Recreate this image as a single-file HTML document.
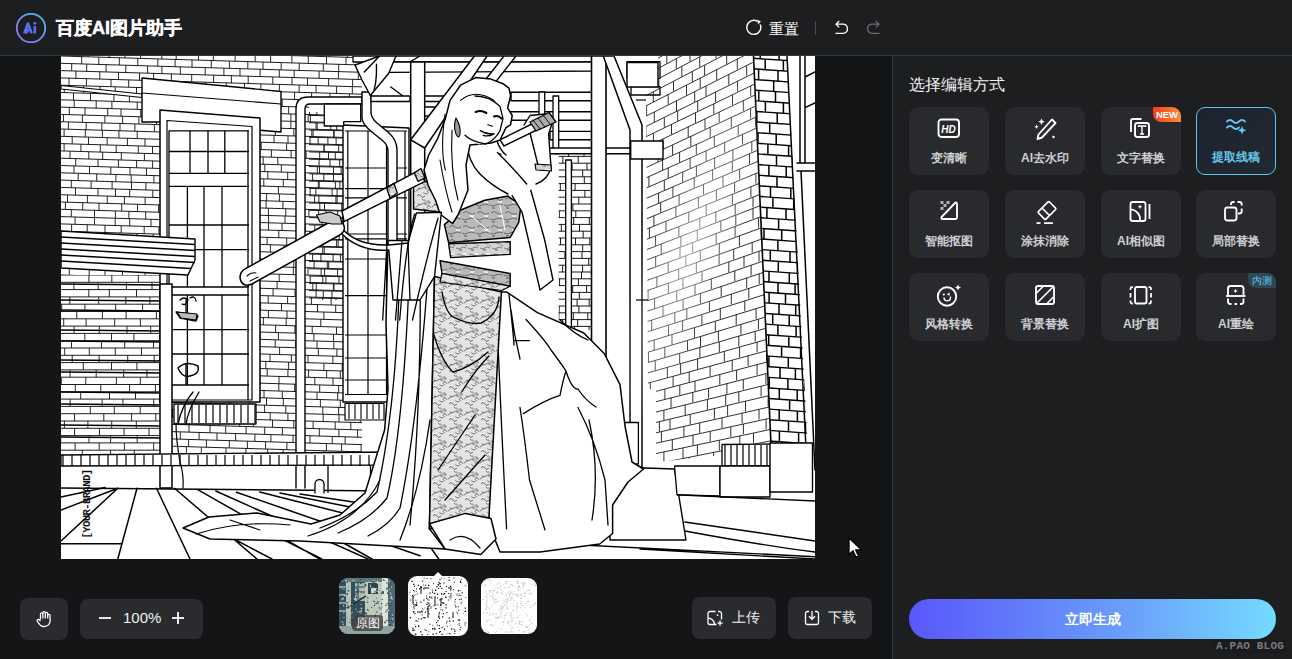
<!DOCTYPE html>
<html><head><meta charset="utf-8">
<style>
*{margin:0;padding:0;box-sizing:border-box}
html,body{width:1292px;height:659px;overflow:hidden;background:#141517;font-family:"Liberation Sans",sans-serif;}
.abs{position:absolute}
#hdr{position:absolute;left:0;top:0;width:1292px;height:56px;background:#1d1e20;border-bottom:1px solid #30353a}
#canvas{position:absolute;left:0;top:56px;width:892px;height:603px;background:#141517}
#panel{position:absolute;left:892px;top:56px;width:400px;height:603px;background:#1d1e20;border-left:1px solid #30353a}
.title{position:absolute;left:56px;top:16px;font-size:18px;font-weight:900;color:#fff;-webkit-text-stroke:0.45px #fff;letter-spacing:0px;white-space:nowrap}
.btn{position:absolute;background:#2a2b2f;border-radius:8px}
.card{position:absolute;width:80px;height:68px;background:#292a2e;border-radius:9px}
.card .lbl{position:absolute;left:0;width:100%;top:42.5px;text-align:center;font-size:12px;font-weight:bold;color:#cfcfd1;white-space:nowrap}
.card svg{position:absolute;left:26px;top:9px}
.sel{background:linear-gradient(135deg,#1d2230,#212a30);border:1.5px solid #5ec6ec}
.sel .lbl{color:#6ac5e8}
</style></head>
<body>
<div id="hdr">
  <svg class="abs" style="left:15px;top:12px" width="32" height="32" viewBox="0 0 32 32">
    <defs><linearGradient id="lg1" x1="0" y1="1" x2="1" y2="0"><stop offset="0" stop-color="#9b6cf5"/><stop offset="1" stop-color="#3fc0ee"/></linearGradient></defs>
    <circle cx="16" cy="16" r="14.2" fill="none" stroke="url(#lg1)" stroke-width="1.8"/>
    <path d="M9.3 21.3 L13 11.5 L16.7 21.3 M10.8 21.3 L13.6 17.2" fill="none" stroke="#5a6ef2" stroke-width="2.6" stroke-linejoin="round"/>
    <rect x="18.5" y="14" width="2.6" height="7.5" fill="#5a6ef2"/>
    <circle cx="19.8" cy="11.2" r="1.5" fill="#5a6ef2"/>
  </svg>
  <div class="title">百度AI图片助手</div>
  <svg class="abs" style="left:745.5px;top:19px" width="18" height="18" viewBox="0 0 18 18">
    <path d="M14.2 5.5 A7 7 0 1 1 11.5 2.4" fill="none" stroke="#fff" stroke-width="1.4"/>
    <path d="M11.2 0.8 L15 2.6 L12 5.2 Z" fill="#fff"/>
  </svg>
  <div class="abs" style="left:769px;top:19.5px;font-size:14.5px;color:#fff;white-space:nowrap">重置</div>
  <div class="abs" style="left:815px;top:21px;width:1px;height:14px;background:#4a4c50"></div>
  <svg class="abs" style="left:834px;top:20px" width="16" height="15" viewBox="0 0 16 15">
    <path d="M1.5 13.3 H9.5 A4.6 4.6 0 0 0 9.5 4.2 H2.5" fill="none" stroke="#fff" stroke-width="1.3"/>
    <path d="M5.2 1 L2 4.2 L5.2 7.4" fill="none" stroke="#fff" stroke-width="1.3"/>
  </svg>
  <svg class="abs" style="left:865px;top:20px" width="16" height="15" viewBox="0 0 16 15">
    <path d="M14.5 13.3 H6.5 A4.6 4.6 0 0 1 6.5 4.2 H13.5" fill="none" stroke="#6a6b6e" stroke-width="1.3"/>
    <path d="M10.8 1 L14 4.2 L10.8 7.4" fill="none" stroke="#6a6b6e" stroke-width="1.3"/>
  </svg>
</div>

<div id="canvas">
  <div class="abs" id="art" style="left:61px;top:0px;width:754px;height:503px;background:#fff;overflow:hidden">
  <!--ART--><svg width="754" height="503" viewBox="61 56 754 503" style="display:block"><clipPath id="cb1"><polygon points="61,56 362,56 362,97 309,97 309,112 343,112 343,402 392,402 392,455 160,455 160,275 61,275"/></clipPath><g clip-path="url(#cb1)" fill="none" stroke="#111"><path d="M61 34.1L362 43.1M61 41.4L362 50.4M61 48.7L362 57.7M61 56L362 65M61 63.3L362 72.3M61 70.6L362 79.6M61 77.9L362 86.9M61 85.2L362 94.2M61 92.5L362 101.5M61 99.8L362 108.8M61 107.1L362 116.1M61 114.4L362 123.4M61 121.7L362 130.7M61 129L362 138M61 136.3L362 145.3M61 143.6L362 152.6M61 150.9L362 159.9M61 158.2L362 167.2M61 165.5L362 174.5M61 172.8L362 181.8M61 180.1L362 189.1M61 187.4L362 196.4M61 194.7L362 203.7M61 202L362 211M61 209.3L362 218.3M61 216.6L362 225.6M61 223.9L362 232.9M61 231.2L362 240.2M61 238.5L362 247.5M61 245.8L362 254.8M61 253.1L362 262.1M61 260.4L362 269.4M61 267.7L362 276.7M61 275L362 284M61 282.3L362 291.3M61 289.6L362 298.6M61 296.9L362 305.9M61 304.2L362 313.2M61 311.5L362 320.5M61 318.8L362 327.8M61 326.1L362 335.1M61 333.4L362 342.4M61 340.7L362 349.7M61 348L362 357M61 355.3L362 364.3M61 362.6L362 371.6M61 369.9L362 378.9M61 377.2L362 386.2M61 384.5L362 393.5M61 391.8L362 400.8M61 399.1L362 408.1M61 406.4L362 415.4M61 413.7L362 422.7M61 421L362 430M61 428.3L362 437.3M61 435.6L362 444.6M61 442.9L362 451.9M61 450.2L362 459.2M61 457.5L362 466.5M61 464.8L362 473.8M61 472.1L362 481.1" stroke-width="0.95"/><path d="M48.7 33.7v7.3M67.8 34.3v7.3M88.7 34.9v7.3M106.8 35.5v7.3M123.5 36v7.3M138.7 36.4v7.3M161.9 37.1v7.3M175.7 37.5v7.3M199.6 38.3v7.3M215.6 38.7v7.3M234.4 39.3v7.3M256.3 40v7.3M272.8 40.5v7.3M295.3 41.1v7.3M311.6 41.6v7.3M329.9 42.2v7.3M347.2 42.7v7.3M41.9 40.8v7.3M58.4 41.3v7.3M78.6 41.9v7.3M98.8 42.5v7.3M115.3 43v7.3M136.3 43.7v7.3M158 44.3v7.3M177.7 44.9v7.3M191.8 45.3v7.3M210.2 45.9v7.3M228.5 46.4v7.3M252.5 47.1v7.3M272.5 47.7v7.3M289.7 48.3v7.3M308.4 48.8v7.3M328.7 49.4v7.3M347.3 50v7.3M51 48.4v7.3M72.3 49v7.3M88.3 49.5v7.3M109.2 50.1v7.3M125 50.6v7.3M140.6 51.1v7.3M161.8 51.7v7.3M176.2 52.2v7.3M198.5 52.8v7.3M213.3 53.3v7.3M235.1 53.9v7.3M255.2 54.5v7.3M270.6 55v7.3M291.9 55.6v7.3M308.3 56.1v7.3M326.5 56.7v7.3M346 57.2v7.3M38.1 55.3v7.3M58.9 55.9v7.3M81.7 56.6v7.3M98.8 57.1v7.3M119.3 57.7v7.3M137.8 58.3v7.3M157.8 58.9v7.3M175.1 59.4v7.3M192 59.9v7.3M211.3 60.5v7.3M229.4 61.1v7.3M247.8 61.6v7.3M263 62.1v7.3M281.2 62.6v7.3M299.2 63.1v7.3M323.3 63.9v7.3M338.7 64.3v7.3M357.7 64.9v7.3M55.9 63.1v7.3M71.7 63.6v7.3M86.7 64.1v7.3M106.1 64.7v7.3M125.8 65.2v7.3M147.6 65.9v7.3M161.9 66.3v7.3M180.3 66.9v7.3M205.2 67.6v7.3M223.9 68.2v7.3M240 68.7v7.3M260.1 69.3v7.3M279.3 69.8v7.3M294.2 70.3v7.3M319.1 71v7.3M338.4 71.6v7.3M358.3 72.2v7.3M41.2 70v7.3M56.4 70.5v7.3M75.9 71v7.3M99.8 71.8v7.3M118.5 72.3v7.3M139.5 73v7.3M153.6 73.4v7.3M171.4 73.9v7.3M191.7 74.5v7.3M213.6 75.2v7.3M231.4 75.7v7.3M248.2 76.2v7.3M272.8 77v7.3M292 77.5v7.3M307.5 78v7.3M328.6 78.6v7.3M352.6 79.3v7.3M53.8 77.7v7.3M69 78.1v7.3M86.4 78.7v7.3M111 79.4v7.3M128.7 79.9v7.3M148.6 80.5v7.3M166.3 81.1v7.3M180.6 81.5v7.3M205.3 82.2v7.3M226.2 82.9v7.3M244.5 83.4v7.3M260.9 83.9v7.3M279.4 84.5v7.3M299.1 85v7.3M316.1 85.6v7.3M336.6 86.2v7.3M352.3 86.6v7.3M43.1 84.7v7.3M64.3 85.3v7.3M83.6 85.9v7.3M100.1 86.4v7.3M115.2 86.8v7.3M136.5 87.5v7.3M158.7 88.1v7.3M175.5 88.6v7.3M195.9 89.2v7.3M213.4 89.8v7.3M233.5 90.4v7.3M254.7 91v7.3M272.5 91.5v7.3M294.6 92.2v7.3M311.6 92.7v7.3M330 93.3v7.3M349.4 93.9v7.3M54.1 92.3v7.3M73.5 92.9v7.3M90.5 93.4v7.3M113.9 94.1v7.3M129.4 94.6v7.3M148.7 95.1v7.3M164.8 95.6v7.3M184.7 96.2v7.3M206.2 96.9v7.3M222.7 97.4v7.3M238.9 97.8v7.3M264.4 98.6v7.3M282.2 99.1v7.3M298 99.6v7.3M321 100.3v7.3M336.2 100.8v7.3M354.7 101.3v7.3M42.6 99.2v7.3M58.7 99.7v7.3M74.2 100.2v7.3M96.2 100.9v7.3M111.9 101.3v7.3M137.2 102.1v7.3M153.9 102.6v7.3M171.6 103.1v7.3M193.1 103.8v7.3M211.5 104.3v7.3M234.6 105v7.3M248.6 105.4v7.3M271.8 106.1v7.3M288.7 106.6v7.3M309.5 107.3v7.3M324.5 107.7v7.3M348.7 108.4v7.3M52 106.8v7.3M69.3 107.3v7.3M85 107.8v7.3M107.7 108.5v7.3M121 108.9v7.3M140.7 109.5v7.3M157.7 110v7.3M175.2 110.5v7.3M194 111.1v7.3M214 111.7v7.3M232.3 112.2v7.3M249.7 112.8v7.3M267.7 113.3v7.3M290.9 114v7.3M308.2 114.5v7.3M326.7 115.1v7.3M348.9 115.7v7.3M42.7 113.9v7.3M63.5 114.5v7.3M82.4 115v7.3M104.9 115.7v7.3M122.6 116.2v7.3M138.9 116.7v7.3M156.5 117.3v7.3M177.6 117.9v7.3M194.2 118.4v7.3M219.3 119.1v7.3M235.4 119.6v7.3M253.5 120.2v7.3M271.5 120.7v7.3M290.9 121.3v7.3M316 122.1v7.3M330.8 122.5v7.3M352.1 123.1v7.3M48.8 121.3v7.3M68.4 121.9v7.3M86.2 122.5v7.3M101.8 122.9v7.3M120 123.5v7.3M134.9 123.9v7.3M154.4 124.5v7.3M175.5 125.1v7.3M196.3 125.8v7.3M217.5 126.4v7.3M232.7 126.9v7.3M252.6 127.4v7.3M275.4 128.1v7.3M293.8 128.7v7.3M313.1 129.3v7.3M334.1 129.9v7.3M349.9 130.4v7.3M45.2 128.5v7.3M64.1 129.1v7.3M85.3 129.7v7.3M102.4 130.2v7.3M118.9 130.7v7.3M137.2 131.3v7.3M160.3 132v7.3M180.2 132.6v7.3M199.1 133.1v7.3M217.9 133.7v7.3M236.2 134.3v7.3M256.2 134.9v7.3M274 135.4v7.3M288 135.8v7.3M310 136.5v7.3M327.9 137v7.3M347.3 137.6v7.3M52.5 136v7.3M72.2 136.6v7.3M88.5 137.1v7.3M107.2 137.7v7.3M127.4 138.3v7.3M145 138.8v7.3M163.7 139.4v7.3M186 140v7.3M203.3 140.6v7.3M223.4 141.2v7.3M240.2 141.7v7.3M261.2 142.3v7.3M286.6 143.1v7.3M300.8 143.5v7.3M324.1 144.2v7.3M338.7 144.6v7.3M360.6 145.3v7.3M40.2 143v7.3M64.1 143.7v7.3M80.9 144.2v7.3M100.3 144.8v7.3M116.2 145.3v7.3M138.3 145.9v7.3M152.5 146.3v7.3M174.2 147v7.3M190.5 147.5v7.3M209.9 148.1v7.3M228.4 148.6v7.3M253.4 149.4v7.3M271.4 149.9v7.3M291.1 150.5v7.3M306.1 151v7.3M328.5 151.6v7.3M344 152.1v7.3M47.9 150.5v7.3M70 151.2v7.3M88.8 151.7v7.3M102.7 152.2v7.3M121.3 152.7v7.3M144.4 153.4v7.3M164.1 154v7.3M184.2 154.6v7.3M202.8 155.2v7.3M219.7 155.7v7.3M242 156.3v7.3M263.2 157v7.3M277.8 157.4v7.3M298.9 158v7.3M319.1 158.6v7.3M339.7 159.3v7.3M357.7 159.8v7.3M41.5 157.6v7.3M57.8 158.1v7.3M75.7 158.6v7.3M98 159.3v7.3M118.4 159.9v7.3M136.6 160.5v7.3M152.6 160.9v7.3M170.9 161.5v7.3M187.6 162v7.3M207.7 162.6v7.3M229.3 163.2v7.3M245.9 163.7v7.3M264.8 164.3v7.3M281.3 164.8v7.3M304.8 165.5v7.3M319.5 166v7.3M341.2 166.6v7.3M355.5 167v7.3M50.8 165.2v7.3M74 165.9v7.3M89.5 166.4v7.3M110.8 167v7.3M130 167.6v7.3M146.5 168.1v7.3M170.6 168.8v7.3M190.5 169.4v7.3M207.7 169.9v7.3M224.6 170.4v7.3M246.8 171.1v7.3M267.8 171.7v7.3M287.7 172.3v7.3M305.2 172.8v7.3M323.8 173.4v7.3M342.5 173.9v7.3M358.4 174.4v7.3M41.8 172.2v7.3M58.5 172.7v7.3M78.2 173.3v7.3M96.7 173.9v7.3M115.9 174.4v7.3M131.2 174.9v7.3M153.9 175.6v7.3M173.1 176.2v7.3M188.1 176.6v7.3M210.4 177.3v7.3M226.3 177.8v7.3M244.6 178.3v7.3M263.8 178.9v7.3M283.3 179.5v7.3M301.4 180v7.3M319.2 180.5v7.3M339.9 181.2v7.3M358.4 181.7v7.3M49.8 179.8v7.3M71.3 180.4v7.3M91.1 181v7.3M112.1 181.6v7.3M131.5 182.2v7.3M145.9 182.6v7.3M165.1 183.2v7.3M188 183.9v7.3M202.2 184.3v7.3M223.6 185v7.3M235.6 185.3v7.3M254.9 185.9v7.3M278.4 186.6v7.3M299 187.2v7.3M315.8 187.7v7.3M337.1 188.4v7.3M351.7 188.8v7.3M40.8 186.8v7.3M57.9 187.3v7.3M75.5 187.8v7.3M98 188.5v7.3M115.5 189v7.3M129.7 189.5v7.3M152.8 190.2v7.3M166.9 190.6v7.3M187.7 191.2v7.3M207.3 191.8v7.3M230 192.5v7.3M244.2 192.9v7.3M266.6 193.6v7.3M279.4 194v7.3M301.9 194.6v7.3M318.9 195.1v7.3M337.1 195.7v7.3M358.9 196.3v7.3M51.8 194.4v7.3M67.5 194.9v7.3M87.4 195.5v7.3M107.3 196.1v7.3M124.4 196.6v7.3M145.1 197.2v7.3M168.8 197.9v7.3M183.1 198.4v7.3M203.3 199v7.3M222.1 199.5v7.3M245.7 200.2v7.3M266.1 200.9v7.3M282.9 201.4v7.3M301.4 201.9v7.3M319.8 202.5v7.3M341.7 203.1v7.3M355.5 203.5v7.3M41.2 201.4v7.3M65.4 202.1v7.3M82.7 202.7v7.3M99 203.1v7.3M121.7 203.8v7.3M137.6 204.3v7.3M158.6 204.9v7.3M179.1 205.5v7.3M198.9 206.1v7.3M217.5 206.7v7.3M234 207.2v7.3M253.5 207.8v7.3M268.4 208.2v7.3M285.8 208.7v7.3M308.9 209.4v7.3M326.1 210v7.3M347.7 210.6v7.3M53.7 209.1v7.3M71.3 209.6v7.3M94.5 210.3v7.3M115.4 210.9v7.3M128.9 211.3v7.3M145.7 211.8v7.3M169 212.5v7.3M188.4 213.1v7.3M209.4 213.8v7.3M229.4 214.4v7.3M246.1 214.9v7.3M268.6 215.5v7.3M285 216v7.3M301.5 216.5v7.3M321.9 217.1v7.3M339.2 217.6v7.3M357 218.2v7.3M39.6 216v7.3M60.3 216.6v7.3M75.1 217v7.3M94.5 217.6v7.3M115.2 218.2v7.3M129.7 218.7v7.3M151 219.3v7.3M168.5 219.8v7.3M189.3 220.4v7.3M208.9 221v7.3M230.6 221.7v7.3M248.5 222.2v7.3M268.5 222.8v7.3M282 223.2v7.3M305.1 223.9v7.3M325.3 224.5v7.3M346.2 225.2v7.3M49.9 223.6v7.3M71.6 224.2v7.3M87.2 224.7v7.3M105 225.2v7.3M121.2 225.7v7.3M144.2 226.4v7.3M159 226.8v7.3M182.1 227.5v7.3M194.8 227.9v7.3M220.7 228.7v7.3M234.1 229.1v7.3M256.8 229.8v7.3M278.8 230.4v7.3M296.4 231v7.3M316.9 231.6v7.3M339.2 232.2v7.3M355.6 232.7v7.3M41.7 230.6v7.3M57.9 231.1v7.3M79.5 231.8v7.3M96 232.2v7.3M119.5 233v7.3M137.1 233.5v7.3M153.2 234v7.3M172.5 234.5v7.3M189.5 235.1v7.3M208.9 235.6v7.3M228.7 236.2v7.3M244.9 236.7v7.3M267.1 237.4v7.3M286.7 238v7.3M305 238.5v7.3M322.8 239.1v7.3M338.2 239.5v7.3M356.7 240.1v7.3M48.8 238.1v7.3M68.6 238.7v7.3M92.7 239.5v7.3M107.4 239.9v7.3M128.3 240.5v7.3M147.7 241.1v7.3M173.3 241.9v7.3M192.1 242.4v7.3M210.9 243v7.3M229.7 243.6v7.3M245.6 244v7.3M270.4 244.8v7.3M284.2 245.2v7.3M303 245.8v7.3M324.3 246.4v7.3M343.8 247v7.3M41.9 245.2v7.3M61.8 245.8v7.3M77.2 246.3v7.3M95.7 246.8v7.3M119.6 247.6v7.3M137.1 248.1v7.3M156.9 248.7v7.3M179.1 249.3v7.3M199 249.9v7.3M216.5 250.5v7.3M234.1 251v7.3M258.3 251.7v7.3M277.9 252.3v7.3M297.1 252.9v7.3M312.6 253.3v7.3M333.1 254v7.3M352.7 254.5v7.3M51.3 252.8v7.3M75.2 253.5v7.3M92.7 254v7.3M106.9 254.5v7.3M125 255v7.3M146.1 255.7v7.3M168 256.3v7.3M181.5 256.7v7.3M199.9 257.3v7.3M218.9 257.8v7.3M236.3 258.4v7.3M255.6 258.9v7.3M272.6 259.4v7.3M293.8 260.1v7.3M314.1 260.7v7.3M327.3 261.1v7.3M347.6 261.7v7.3M42.5 259.8v7.3M58.3 260.3v7.3M81.1 261v7.3M100 261.6v7.3M120.6 262.2v7.3M136.4 262.7v7.3M155.8 263.2v7.3M177.1 263.9v7.3M192.9 264.4v7.3M212.8 265v7.3M237.5 265.7v7.3M250.7 266.1v7.3M271.9 266.7v7.3M293.3 267.4v7.3M308 267.8v7.3M324.6 268.3v7.3M349.6 269.1v7.3M51.6 267.4v7.3M69.3 267.9v7.3M89.2 268.5v7.3M105 269v7.3M122.5 269.5v7.3M145.1 270.2v7.3M165.5 270.8v7.3M181.9 271.3v7.3M202.1 271.9v7.3M222.8 272.6v7.3M241.6 273.1v7.3M259.9 273.7v7.3M279.2 274.2v7.3M298.5 274.8v7.3M322.8 275.6v7.3M339 276v7.3M359.6 276.7v7.3M44.4 274.5v7.3M64.4 275.1v7.3M84.1 275.7v7.3M105.9 276.3v7.3M124.7 276.9v7.3M145.4 277.5v7.3M161.5 278v7.3M180.2 278.6v7.3M201.2 279.2v7.3M218.1 279.7v7.3M240.3 280.4v7.3M255.9 280.8v7.3M277.1 281.5v7.3M296.6 282.1v7.3M312.8 282.6v7.3M334 283.2v7.3M357 283.9v7.3M52 282v7.3M73.1 282.7v7.3M86.1 283.1v7.3M102.5 283.5v7.3M127.6 284.3v7.3M147.2 284.9v7.3M163.5 285.4v7.3M179.7 285.9v7.3M200.4 286.5v7.3M220 287.1v7.3M236.1 287.6v7.3M257 288.2v7.3M273.1 288.7v7.3M295 289.3v7.3M316.1 290v7.3M332 290.4v7.3M352.9 291.1v7.3M43 289.1v7.3M62.9 289.7v7.3M80 290.2v7.3M92.7 290.6v7.3M115.1 291.2v7.3M131.5 291.7v7.3M153.4 292.4v7.3M171.7 292.9v7.3M191.7 293.5v7.3M211.5 294.1v7.3M232.4 294.7v7.3M252.7 295.4v7.3M268.2 295.8v7.3M287.6 296.4v7.3M311.4 297.1v7.3M331.1 297.7v7.3M348.2 298.2v7.3M50.6 296.6v7.3M70.8 297.2v7.3M90 297.8v7.3M112.1 298.4v7.3M132.9 299.1v7.3M148.3 299.5v7.3M169.1 300.1v7.3M188.5 300.7v7.3M205 301.2v7.3M225.7 301.8v7.3M244.7 302.4v7.3M260.6 302.9v7.3M281.5 303.5v7.3M298.3 304v7.3M317.5 304.6v7.3M335.7 305.1v7.3M358.8 305.8v7.3M39.1 303.5v7.3M59.1 304.1v7.3M75.5 304.6v7.3M97.2 305.3v7.3M111.9 305.7v7.3M132.7 306.4v7.3M156.5 307.1v7.3M175.2 307.6v7.3M190.7 308.1v7.3M209.7 308.7v7.3M229.3 309.2v7.3M246.5 309.8v7.3M268.4 310.4v7.3M287 311v7.3M302.9 311.5v7.3M323.9 312.1v7.3M346.9 312.8v7.3M53.3 311.3v7.3M68.9 311.7v7.3M92.6 312.4v7.3M111.7 313v7.3M132 313.6v7.3M150.2 314.2v7.3M169.5 314.8v7.3M185.6 315.2v7.3M207.5 315.9v7.3M224.2 316.4v7.3M244.2 317v7.3M263.4 317.6v7.3M286.2 318.3v7.3M302.3 318.7v7.3M320.8 319.3v7.3M343.3 320v7.3M357.8 320.4v7.3M45.8 318.3v7.3M59.8 318.8v7.3M81.7 319.4v7.3M101.4 320v7.3M122.9 320.7v7.3M139.5 321.2v7.3M159.1 321.7v7.3M179.9 322.4v7.3M198.3 322.9v7.3M220.7 323.6v7.3M237.4 324.1v7.3M254.4 324.6v7.3M275.6 325.2v7.3M294.9 325.8v7.3M312.2 326.3v7.3M336.5 327.1v7.3M351.3 327.5v7.3M49.3 325.8v7.3M70.2 326.4v7.3M89.6 327v7.3M108.1 327.5v7.3M128.4 328.1v7.3M144.8 328.6v7.3M166.2 329.3v7.3M181.9 329.7v7.3M200.1 330.3v7.3M221.8 330.9v7.3M241.7 331.5v7.3M260.1 332.1v7.3M278.4 332.6v7.3M298.6 333.2v7.3M313.9 333.7v7.3M333.5 334.3v7.3M353.2 334.9v7.3M44 332.9v7.3M59.2 333.3v7.3M84.6 334.1v7.3M100.2 334.6v7.3M123.4 335.3v7.3M136.8 335.7v7.3M161.4 336.4v7.3M176.1 336.9v7.3M194.5 337.4v7.3M215.3 338v7.3M236.2 338.7v7.3M252 339.1v7.3M275.2 339.8v7.3M295.7 340.4v7.3M317 341.1v7.3M333.8 341.6v7.3M355.5 342.2v7.3M53.6 340.5v7.3M69.1 340.9v7.3M86.2 341.5v7.3M104.7 342v7.3M124.1 342.6v7.3M145.2 343.2v7.3M166.6 343.9v7.3M183.4 344.4v7.3M200.6 344.9v7.3M222 345.5v7.3M237.9 346v7.3M256.7 346.6v7.3M279.6 347.3v7.3M296.6 347.8v7.3M318.3 348.4v7.3M336.9 349v7.3M352.9 349.5v7.3M41.4 347.4v7.3M58.7 347.9v7.3M79.3 348.5v7.3M99.1 349.1v7.3M117.3 349.7v7.3M137.3 350.3v7.3M159 350.9v7.3M177.2 351.5v7.3M193.8 352v7.3M211.9 352.5v7.3M233.7 353.2v7.3M251.9 353.7v7.3M270 354.3v7.3M291.4 354.9v7.3M308 355.4v7.3M332.9 356.2v7.3M347.1 356.6v7.3M47.7 354.9v7.3M70.9 355.6v7.3M91.6 356.2v7.3M111.2 356.8v7.3M130.7 357.4v7.3M150.3 358v7.3M167.7 358.5v7.3M188.9 359.1v7.3M206.8 359.7v7.3M224.1 360.2v7.3M249.5 361v7.3M265.8 361.4v7.3M288.6 362.1v7.3M304.7 362.6v7.3M323.9 363.2v7.3M342.2 363.7v7.3M41.1 362v7.3M60.2 362.6v7.3M82.3 363.2v7.3M102.3 363.8v7.3M115.7 364.2v7.3M137.7 364.9v7.3M160.8 365.6v7.3M176.2 366.1v7.3M195 366.6v7.3M209.9 367.1v7.3M226.1 367.6v7.3M246.6 368.2v7.3M267.2 368.8v7.3M287.9 369.4v7.3M308.6 370v7.3M326.6 370.6v7.3M340.3 371v7.3M54.5 369.7v7.3M69.8 370.2v7.3M93 370.9v7.3M113.2 371.5v7.3M131.4 372v7.3M145.6 372.4v7.3M166.5 373.1v7.3M183.3 373.6v7.3M205.5 374.2v7.3M223.9 374.8v7.3M238.1 375.2v7.3M259.6 375.9v7.3M279 376.4v7.3M297.3 377v7.3M314.8 377.5v7.3M333 378.1v7.3M353.7 378.7v7.3M43.5 376.7v7.3M58.7 377.1v7.3M83.4 377.9v7.3M101.5 378.4v7.3M124.8 379.1v7.3M142.9 379.7v7.3M160.1 380.2v7.3M180.3 380.8v7.3M201.4 381.4v7.3M223.2 382.1v7.3M236.5 382.5v7.3M257.1 383.1v7.3M278.8 383.7v7.3M294.7 384.2v7.3M319.7 385v7.3M338.7 385.5v7.3M358.5 386.1v7.3M54.7 384.3v7.3M68.1 384.7v7.3M91.6 385.4v7.3M109.1 385.9v7.3M126.8 386.5v7.3M148.9 387.1v7.3M164.9 387.6v7.3M186.2 388.3v7.3M204.6 388.8v7.3M224 389.4v7.3M240.7 389.9v7.3M264 390.6v7.3M282.3 391.1v7.3M301.6 391.7v7.3M317 392.2v7.3M337.7 392.8v7.3M355.4 393.3v7.3M40 391.2v7.3M62.2 391.8v7.3M75.4 392.2v7.3M99 392.9v7.3M115.5 393.4v7.3M133.4 394v7.3M147.6 394.4v7.3M173.5 395.2v7.3M190.7 395.7v7.3M210 396.3v7.3M229.7 396.9v7.3M249 397.4v7.3M266.5 398v7.3M283.3 398.5v7.3M300.3 399v7.3M320.4 399.6v7.3M340.3 400.2v7.3M363.8 400.9v7.3M51.3 398.8v7.3M72.1 399.4v7.3M87.8 399.9v7.3M109.7 400.6v7.3M126 401.1v7.3M143.4 401.6v7.3M169.2 402.3v7.3M181.4 402.7v7.3M201.3 403.3v7.3M225.2 404v7.3M240.5 404.5v7.3M264.6 405.2v7.3M285.8 405.8v7.3M298 406.2v7.3M322.8 407v7.3M338.6 407.4v7.3M360.8 408.1v7.3M39.8 405.8v7.3M58.7 406.3v7.3M74.9 406.8v7.3M95.1 407.4v7.3M112.4 407.9v7.3M126.1 408.4v7.3M147.9 409v7.3M172.5 409.7v7.3M188.7 410.2v7.3M207.2 410.8v7.3M232.4 411.5v7.3M249.6 412.1v7.3M270.2 412.7v7.3M287.9 413.2v7.3M303.1 413.7v7.3M323.2 414.3v7.3M339 414.7v7.3M360.3 415.4v7.3M48.7 413.3v7.3M69.5 414v7.3M88.1 414.5v7.3M108.8 415.1v7.3M126.8 415.7v7.3M143.5 416.2v7.3M159 416.6v7.3M178.4 417.2v7.3M195.9 417.7v7.3M219.1 418.4v7.3M239.7 419.1v7.3M253.3 419.5v7.3M272.5 420v7.3M293.8 420.7v7.3M313.1 421.3v7.3M335.2 421.9v7.3M350.8 422.4v7.3M40.2 420.4v7.3M63.3 421.1v7.3M79.1 421.5v7.3M94.4 422v7.3M117.6 422.7v7.3M131.6 423.1v7.3M152.1 423.7v7.3M169.1 424.2v7.3M189 424.8v7.3M210 425.5v7.3M225.7 425.9v7.3M246.1 426.6v7.3M264.7 427.1v7.3M282.4 427.6v7.3M301 428.2v7.3M319.3 428.8v7.3M338.9 429.3v7.3M357.6 429.9v7.3M52.2 428v7.3M66.7 428.5v7.3M87.8 429.1v7.3M104.3 429.6v7.3M123.1 430.2v7.3M141.8 430.7v7.3M162.9 431.4v7.3M180.3 431.9v7.3M199.1 432.4v7.3M217 433v7.3M235.6 433.5v7.3M254.9 434.1v7.3M270.9 434.6v7.3M293 435.3v7.3M310 435.8v7.3M332.3 436.4v7.3M345.1 436.8v7.3M37.9 434.9v7.3M60.6 435.6v7.3M80.5 436.2v7.3M98.9 436.7v7.3M113.8 437.2v7.3M134 437.8v7.3M151.7 438.3v7.3M170 438.9v7.3M188.6 439.4v7.3M206.4 440v7.3M229.3 440.6v7.3M247.4 441.2v7.3M265.6 441.7v7.3M286.9 442.4v7.3M303.4 442.9v7.3M326.4 443.6v7.3M341.6 444v7.3M361.1 444.6v7.3M55.2 442.7v7.3M75.1 443.3v7.3M90.3 443.8v7.3M113.6 444.5v7.3M128.6 444.9v7.3M147.7 445.5v7.3M165.1 446v7.3M186.4 446.7v7.3M201.3 447.1v7.3M226 447.9v7.3M245.9 448.4v7.3M267.7 449.1v7.3M283.1 449.6v7.3M304.1 450.2v7.3M323.8 450.8v7.3M346.9 451.5v7.3M41.1 449.6v7.3M62.4 450.2v7.3M76.7 450.7v7.3M95.2 451.2v7.3M119.6 452v7.3M134.5 452.4v7.3M155 453v7.3M170.1 453.5v7.3M188.7 454v7.3M207.3 454.6v7.3M224 455.1v7.3M247.7 455.8v7.3M265.5 456.3v7.3M282.9 456.9v7.3M304.3 457.5v7.3M324.4 458.1v7.3M341.5 458.6v7.3M358.9 459.1v7.3M51.5 457.2v7.3M67.2 457.7v7.3M87 458.3v7.3M107.7 458.9v7.3M128.8 459.5v7.3M145.7 460v7.3M159.1 460.4v7.3M181.8 461.1v7.3M198.8 461.6v7.3M219.6 462.3v7.3M234 462.7v7.3M257.9 463.4v7.3M273.1 463.9v7.3M293.6 464.5v7.3M314.1 465.1v7.3M332.4 465.6v7.3M353.7 466.3v7.3M43.6 464.3v7.3M64.2 464.9v7.3M81.5 465.4v7.3M97.9 465.9v7.3M115.6 466.4v7.3M136.9 467.1v7.3M156.8 467.7v7.3M176.3 468.3v7.3M193.9 468.8v7.3M214.3 469.4v7.3M230.5 469.9v7.3M249.7 470.5v7.3M270.4 471.1v7.3M289 471.6v7.3M305.9 472.1v7.3M323.9 472.7v7.3M345.8 473.3v7.3M52.1 471.8v7.3M75.6 472.5v7.3M92.6 473v7.3M115.6 473.7v7.3M127.4 474.1v7.3M149.4 474.8v7.3M171.7 475.4v7.3M192.2 476v7.3M208.4 476.5v7.3M227.4 477.1v7.3M247 477.7v7.3M267.6 478.3v7.3M284.7 478.8v7.3M301.2 479.3v7.3M321 479.9v7.3M342.2 480.5v7.3M360.7 481.1v7.3" stroke-width="0.9"/></g><clipPath id="cb2"><polygon points="61,275 160,275 160,455 61,455"/></clipPath><g clip-path="url(#cb2)" fill="none" stroke="#111"><path d="M61 260.4L160 260.4M61 267.7L160 267.7M61 275L160 275M61 282.3L160 282.3M61 289.6L160 289.6M61 296.9L160 296.9M61 304.2L160 304.2M61 311.5L160 311.5M61 318.8L160 318.8M61 326.1L160 326.1M61 333.4L160 333.4M61 340.7L160 340.7M61 348L160 348M61 355.3L160 355.3M61 362.6L160 362.6M61 369.9L160 369.9M61 377.2L160 377.2M61 384.5L160 384.5M61 391.8L160 391.8M61 399.1L160 399.1M61 406.4L160 406.4M61 413.7L160 413.7M61 421L160 421M61 428.3L160 428.3M61 435.6L160 435.6M61 442.9L160 442.9M61 450.2L160 450.2M61 457.5L160 457.5" stroke-width="0.95"/><path d="M38.5 260.4v7.3M61.1 260.4v7.3M86.2 260.4v7.3M116.3 260.4v7.3M140.8 260.4v7.3M50.7 267.7v7.3M79.8 267.7v7.3M103.9 267.7v7.3M127.8 267.7v7.3M155.1 267.7v7.3M34.5 275v7.3M59.3 275v7.3M88.9 275v7.3M111.8 275v7.3M138.3 275v7.3M44.8 282.3v7.3M73.9 282.3v7.3M98.2 282.3v7.3M126.4 282.3v7.3M152 282.3v7.3M37.4 289.6v7.3M60.4 289.6v7.3M88.8 289.6v7.3M109.3 289.6v7.3M136.5 289.6v7.3M50.3 296.9v7.3M69.8 296.9v7.3M98.7 296.9v7.3M125.8 296.9v7.3M149.9 296.9v7.3M37.1 304.2v7.3M61.7 304.2v7.3M84.9 304.2v7.3M115.6 304.2v7.3M142.6 304.2v7.3M44.3 311.5v7.3M76.8 311.5v7.3M102.4 311.5v7.3M126.1 311.5v7.3M156.4 311.5v7.3M35.3 318.8v7.3M63.7 318.8v7.3M86.1 318.8v7.3M114.7 318.8v7.3M140.4 318.8v7.3M45.6 326.1v7.3M74.1 326.1v7.3M99.3 326.1v7.3M127 326.1v7.3M150.7 326.1v7.3M35.4 333.4v7.3M59.4 333.4v7.3M84.8 333.4v7.3M111.5 333.4v7.3M133.9 333.4v7.3M45 340.7v7.3M71.5 340.7v7.3M101.5 340.7v7.3M124.7 340.7v7.3M153.5 340.7v7.3M35.1 348v7.3M64.7 348v7.3M89.3 348v7.3M115.3 348v7.3M141.5 348v7.3M45.9 355.3v7.3M72.2 355.3v7.3M99.1 355.3v7.3M127.7 355.3v7.3M154.2 355.3v7.3M36 362.6v7.3M60.2 362.6v7.3M83.3 362.6v7.3M111.5 362.6v7.3M136.9 362.6v7.3M47.4 369.9v7.3M70 369.9v7.3M96.2 369.9v7.3M123.7 369.9v7.3M146.9 369.9v7.3M38.4 377.2v7.3M61.3 377.2v7.3M85.8 377.2v7.3M116.4 377.2v7.3M140.3 377.2v7.3M47.3 384.5v7.3M75.3 384.5v7.3M100.8 384.5v7.3M129.6 384.5v7.3M155.4 384.5v7.3M31.1 391.8v7.3M56.8 391.8v7.3M80.7 391.8v7.3M109.5 391.8v7.3M135.5 391.8v7.3M161 391.8v7.3M48.8 399.1v7.3M70.1 399.1v7.3M102.1 399.1v7.3M122.9 399.1v7.3M153.7 399.1v7.3M31.6 406.4v7.3M59.4 406.4v7.3M90.3 406.4v7.3M114.3 406.4v7.3M140.2 406.4v7.3M44.7 413.7v7.3M74.5 413.7v7.3M103.8 413.7v7.3M131.6 413.7v7.3M155.8 413.7v7.3M35.4 421v7.3M64.4 421v7.3M87.9 421v7.3M111.7 421v7.3M136.3 421v7.3M50.7 428.3v7.3M74.6 428.3v7.3M99.4 428.3v7.3M124.1 428.3v7.3M149 428.3v7.3M34.1 435.6v7.3M60.7 435.6v7.3M89 435.6v7.3M110.6 435.6v7.3M137.2 435.6v7.3M49.2 442.9v7.3M75.1 442.9v7.3M99.2 442.9v7.3M124.4 442.9v7.3M153.7 442.9v7.3M33.3 450.2v7.3M56.3 450.2v7.3M82.3 450.2v7.3M110.6 450.2v7.3M134.3 450.2v7.3M45.5 457.5v7.3M68.8 457.5v7.3M101.2 457.5v7.3M125.3 457.5v7.3M152.3 457.5v7.3" stroke-width="0.9"/></g><path d="M61.0 85.5 L142.0 94.0 L142.0 97.5 L61.0 89.0 Z" fill="#fff" stroke="#000" stroke-width="1.2" stroke-linejoin="round"/><path d="M142.0 78.0 L281.0 91.5 L281.0 132.0 L160.0 122.0 L142.0 122.0 Z" fill="#fff" stroke="#000" stroke-width="1.4" stroke-linejoin="round"/><line x1="142.0" y1="93.0" x2="281.0" y2="104.0" stroke="#000" stroke-width="1.2"/><path d="M160.0 110.0 L260.0 118.0 L260.0 402.0 L160.0 402.0 Z" fill="#fff" stroke="#000" stroke-width="1.5" stroke-linejoin="round"/><path d="M167.0 120.5 L252.0 126.5 L252.0 400.0 L167.0 400.0 Z" fill="#fff" stroke="#000" stroke-width="1.2" stroke-linejoin="round"/><line x1="169.0" y1="130.8" x2="249.0" y2="130.8" stroke="#000" stroke-width="1.3"/><line x1="169.0" y1="151.5" x2="249.0" y2="151.5" stroke="#000" stroke-width="1.3"/><line x1="169.0" y1="173.4" x2="249.0" y2="173.4" stroke="#000" stroke-width="1.3"/><line x1="169.0" y1="186.3" x2="249.0" y2="186.3" stroke="#000" stroke-width="1.3"/><line x1="169.0" y1="225.0" x2="249.0" y2="225.0" stroke="#000" stroke-width="1.3"/><line x1="169.0" y1="249.7" x2="249.0" y2="249.7" stroke="#000" stroke-width="1.3"/><line x1="169.0" y1="287.0" x2="249.0" y2="287.0" stroke="#000" stroke-width="1.3"/><line x1="169.0" y1="295.0" x2="249.0" y2="295.0" stroke="#000" stroke-width="1.3"/><line x1="169.0" y1="329.6" x2="249.0" y2="329.6" stroke="#000" stroke-width="1.3"/><line x1="169.0" y1="354.0" x2="249.0" y2="354.0" stroke="#000" stroke-width="1.3"/><line x1="169.0" y1="385.0" x2="249.0" y2="385.0" stroke="#000" stroke-width="1.3"/><line x1="169.0" y1="130.8" x2="169.0" y2="400.0" stroke="#000" stroke-width="1.3"/><line x1="248.0" y1="130.8" x2="248.0" y2="400.0" stroke="#000" stroke-width="1.3"/><line x1="190.0" y1="130.8" x2="190.0" y2="173.4" stroke="#000" stroke-width="1.3"/><line x1="208.0" y1="130.8" x2="208.0" y2="173.4" stroke="#000" stroke-width="1.3"/><line x1="224.8" y1="130.8" x2="224.8" y2="173.4" stroke="#000" stroke-width="1.3"/><line x1="187.4" y1="186.3" x2="187.4" y2="287.0" stroke="#000" stroke-width="1.3"/><line x1="187.4" y1="295.0" x2="187.4" y2="385.0" stroke="#000" stroke-width="1.3"/><line x1="204.0" y1="186.3" x2="204.0" y2="287.0" stroke="#000" stroke-width="1.3"/><line x1="204.0" y1="295.0" x2="204.0" y2="385.0" stroke="#000" stroke-width="1.3"/><line x1="222.0" y1="186.3" x2="222.0" y2="287.0" stroke="#000" stroke-width="1.3"/><line x1="222.0" y1="295.0" x2="222.0" y2="385.0" stroke="#000" stroke-width="1.3"/><path d="M61.0 231.0 L195.0 239.0 L195.0 260.0 L188.0 275.0 L61.0 268.0 Z" fill="#fff" stroke="#000" stroke-width="1.4" stroke-linejoin="round"/><line x1="61.0" y1="237.0" x2="195.0" y2="244.5" stroke="#000" stroke-width="1.5"/><line x1="61.0" y1="243.0" x2="195.0" y2="250.5" stroke="#000" stroke-width="1.5"/><line x1="61.0" y1="249.0" x2="195.0" y2="256.5" stroke="#000" stroke-width="1.5"/><line x1="61.0" y1="255.0" x2="195.0" y2="262.5" stroke="#000" stroke-width="1.5"/><line x1="61.0" y1="261.0" x2="191.0" y2="268.5" stroke="#000" stroke-width="1.5"/><line x1="61.0" y1="284.0" x2="164.0" y2="285.0" stroke="#000" stroke-width="1.3"/><line x1="61.0" y1="300.0" x2="164.0" y2="301.0" stroke="#000" stroke-width="1.3"/><line x1="61.0" y1="310.0" x2="164.0" y2="311.0" stroke="#000" stroke-width="1.3"/><line x1="61.0" y1="330.0" x2="164.0" y2="331.0" stroke="#000" stroke-width="1.3"/><line x1="61.0" y1="341.0" x2="164.0" y2="342.0" stroke="#000" stroke-width="1.3"/><line x1="61.0" y1="360.0" x2="164.0" y2="361.0" stroke="#000" stroke-width="1.3"/><line x1="61.0" y1="372.0" x2="164.0" y2="373.0" stroke="#000" stroke-width="1.3"/><line x1="61.0" y1="392.0" x2="164.0" y2="393.0" stroke="#000" stroke-width="1.3"/><line x1="61.0" y1="404.0" x2="164.0" y2="405.0" stroke="#000" stroke-width="1.3"/><line x1="61.0" y1="425.0" x2="164.0" y2="426.0" stroke="#000" stroke-width="1.3"/><line x1="61.0" y1="437.0" x2="164.0" y2="438.0" stroke="#000" stroke-width="1.3"/><path d="M160.0 284.0 L172.0 284.0 L172.0 488.0 L160.0 488.0 Z" fill="#fff" stroke="#000" stroke-width="1.5" stroke-linejoin="round"/><path d="M296 488 V109 Q296 97 308 97 H362 V104 H310 Q305 104 305 109 V488" fill="#fff" stroke="#000" stroke-width="1.4" stroke-linejoin="round" stroke-linecap="round"/><path d="M61.0 455.0 L390.0 452.0 L390.0 465.0 L61.0 466.0 Z" fill="#fff" stroke="#000" stroke-width="1.3" stroke-linejoin="round"/><line x1="63.0" y1="455.0" x2="63.0" y2="466.0" stroke="#000" stroke-width="1.2"/><line x1="72.0" y1="455.0" x2="72.0" y2="466.0" stroke="#000" stroke-width="1.2"/><line x1="81.0" y1="455.0" x2="81.0" y2="466.0" stroke="#000" stroke-width="1.2"/><line x1="90.0" y1="455.0" x2="90.0" y2="466.0" stroke="#000" stroke-width="1.2"/><line x1="99.0" y1="455.0" x2="99.0" y2="466.0" stroke="#000" stroke-width="1.2"/><line x1="108.0" y1="455.0" x2="108.0" y2="466.0" stroke="#000" stroke-width="1.2"/><line x1="117.0" y1="455.0" x2="117.0" y2="466.0" stroke="#000" stroke-width="1.2"/><line x1="126.0" y1="455.0" x2="126.0" y2="466.0" stroke="#000" stroke-width="1.2"/><line x1="135.0" y1="455.0" x2="135.0" y2="466.0" stroke="#000" stroke-width="1.2"/><line x1="144.0" y1="455.0" x2="144.0" y2="466.0" stroke="#000" stroke-width="1.2"/><line x1="153.0" y1="455.0" x2="153.0" y2="466.0" stroke="#000" stroke-width="1.2"/><line x1="162.0" y1="455.0" x2="162.0" y2="466.0" stroke="#000" stroke-width="1.2"/><line x1="171.0" y1="455.0" x2="171.0" y2="466.0" stroke="#000" stroke-width="1.2"/><line x1="180.0" y1="455.0" x2="180.0" y2="466.0" stroke="#000" stroke-width="1.2"/><line x1="189.0" y1="455.0" x2="189.0" y2="466.0" stroke="#000" stroke-width="1.2"/><line x1="198.0" y1="455.0" x2="198.0" y2="466.0" stroke="#000" stroke-width="1.2"/><line x1="207.0" y1="455.0" x2="207.0" y2="466.0" stroke="#000" stroke-width="1.2"/><line x1="216.0" y1="455.0" x2="216.0" y2="466.0" stroke="#000" stroke-width="1.2"/><line x1="225.0" y1="455.0" x2="225.0" y2="466.0" stroke="#000" stroke-width="1.2"/><line x1="234.0" y1="455.0" x2="234.0" y2="466.0" stroke="#000" stroke-width="1.2"/><line x1="243.0" y1="455.0" x2="243.0" y2="466.0" stroke="#000" stroke-width="1.2"/><line x1="252.0" y1="455.0" x2="252.0" y2="466.0" stroke="#000" stroke-width="1.2"/><line x1="261.0" y1="455.0" x2="261.0" y2="466.0" stroke="#000" stroke-width="1.2"/><line x1="270.0" y1="455.0" x2="270.0" y2="466.0" stroke="#000" stroke-width="1.2"/><line x1="279.0" y1="455.0" x2="279.0" y2="466.0" stroke="#000" stroke-width="1.2"/><line x1="288.0" y1="455.0" x2="288.0" y2="466.0" stroke="#000" stroke-width="1.2"/><line x1="297.0" y1="455.0" x2="297.0" y2="466.0" stroke="#000" stroke-width="1.2"/><line x1="306.0" y1="455.0" x2="306.0" y2="466.0" stroke="#000" stroke-width="1.2"/><line x1="315.0" y1="455.0" x2="315.0" y2="466.0" stroke="#000" stroke-width="1.2"/><line x1="324.0" y1="455.0" x2="324.0" y2="466.0" stroke="#000" stroke-width="1.2"/><line x1="333.0" y1="455.0" x2="333.0" y2="466.0" stroke="#000" stroke-width="1.2"/><line x1="342.0" y1="455.0" x2="342.0" y2="466.0" stroke="#000" stroke-width="1.2"/><line x1="351.0" y1="455.0" x2="351.0" y2="466.0" stroke="#000" stroke-width="1.2"/><line x1="360.0" y1="455.0" x2="360.0" y2="466.0" stroke="#000" stroke-width="1.2"/><line x1="369.0" y1="455.0" x2="369.0" y2="466.0" stroke="#000" stroke-width="1.2"/><line x1="378.0" y1="455.0" x2="378.0" y2="466.0" stroke="#000" stroke-width="1.2"/><line x1="387.0" y1="455.0" x2="387.0" y2="466.0" stroke="#000" stroke-width="1.2"/><line x1="61.0" y1="488.0" x2="390.0" y2="491.0" stroke="#000" stroke-width="1.5"/><path d="M61 497 L105 487.5 M61 510 L117.8 488.3 M61 541 L117.8 488.3 M137 488.3 L117.8 559 M156.5 488.3 L190 559 M174.5 488.3 L257 559 M197.7 489.6 L420 616.0 M215.8 491 L420 582.2 M236.4 492.2 L420 555.7 M259.7 492 L420 532.6 M280 493 L420 521.0 M300 494 L420 512.0 M232.8 538.4 L271.9 559 M285 540.5 L321.7 559 M340 541 L372 559 M425.7 540.5 L438.7 559 M61 543.8 H121.6" fill="none" stroke="#000" stroke-width="1.5" stroke-linejoin="round" stroke-linecap="round"/><path d="M174.0 404.0 L256.0 404.0 L256.0 424.0 L174.0 424.0 Z" fill="#fff" stroke="#000" stroke-width="1.3" stroke-linejoin="round"/><line x1="178.0" y1="405.0" x2="178.0" y2="423.0" stroke="#000" stroke-width="1.2"/><line x1="185.0" y1="405.0" x2="185.0" y2="423.0" stroke="#000" stroke-width="1.2"/><line x1="192.0" y1="405.0" x2="192.0" y2="423.0" stroke="#000" stroke-width="1.2"/><line x1="199.0" y1="405.0" x2="199.0" y2="423.0" stroke="#000" stroke-width="1.2"/><line x1="206.0" y1="405.0" x2="206.0" y2="423.0" stroke="#000" stroke-width="1.2"/><line x1="213.0" y1="405.0" x2="213.0" y2="423.0" stroke="#000" stroke-width="1.2"/><line x1="220.0" y1="405.0" x2="220.0" y2="423.0" stroke="#000" stroke-width="1.2"/><line x1="227.0" y1="405.0" x2="227.0" y2="423.0" stroke="#000" stroke-width="1.2"/><line x1="234.0" y1="405.0" x2="234.0" y2="423.0" stroke="#000" stroke-width="1.2"/><line x1="241.0" y1="405.0" x2="241.0" y2="423.0" stroke="#000" stroke-width="1.2"/><line x1="248.0" y1="405.0" x2="248.0" y2="423.0" stroke="#000" stroke-width="1.2"/><line x1="255.0" y1="405.0" x2="255.0" y2="423.0" stroke="#000" stroke-width="1.2"/><line x1="328.0" y1="466.0" x2="328.0" y2="493.0" stroke="#000" stroke-width="1.3"/><line x1="370.5" y1="466.0" x2="370.5" y2="491.0" stroke="#000" stroke-width="1.3"/><path d="M315 493 V484 A4.5 4.5 0 0 1 324 484 V493" fill="#fff" stroke="#000" stroke-width="1.3" stroke-linejoin="round" stroke-linecap="round"/><path d="M180 300 q4 -4 8 0 q-2 6 -6 4 M190 298 q5 -3 6 3 M186 300 V318 M176 312 L198 316 L196 321 L180 318 Z" fill="none" stroke="#000" stroke-width="1.3" stroke-linejoin="round" stroke-linecap="round"/><path d="M177.0 312.0 L197.0 314.0 L196.0 320.0 L181.0 318.0 Z" fill="#bbb" stroke="#000" stroke-width="1.1" stroke-linejoin="round"/><path d="M178 368 q8 -8 20 -2 q2 8 -8 10 q-8 2 -12 -8 M186 365 V384" fill="none" stroke="#000" stroke-width="1.4" stroke-linejoin="round" stroke-linecap="round"/><path d="M193 392 Q182 405 178 424 M199 392 Q188 410 186 424" fill="none" stroke="#000" stroke-width="1.3" stroke-linejoin="round" stroke-linecap="round"/><path d="M180 462 Q184 475 183 488 M176 423 Q176 440 180 462" fill="none" stroke="#000" stroke-width="1.2" stroke-linejoin="round" stroke-linecap="round"/><g transform="translate(86.5 504) rotate(-90)"><text x="0" y="3.8" text-anchor="middle" font-family="Liberation Mono" font-size="10.5" font-weight="bold" fill="#111" letter-spacing="-0.6" textLength="69" lengthAdjust="spacingAndGlyphs">[YOUR-BRAND]</text></g><clipPath id="cb3"><polygon points="309,112 343,112 343,300 309,300"/></clipPath><g clip-path="url(#cb3)" fill="none" stroke="#111"><path d="M309 93.5L343 94.2M309 100.8L343 101.5M309 108.1L343 108.8M309 115.4L343 116.1M309 122.7L343 123.4M309 130L343 130.7M309 137.3L343 138M309 144.6L343 145.3M309 151.9L343 152.6M309 159.2L343 159.9M309 166.5L343 167.2M309 173.8L343 174.5M309 181.1L343 181.8M309 188.4L343 189.1M309 195.7L343 196.4M309 203L343 203.7M309 210.3L343 211M309 217.6L343 218.3M309 224.9L343 225.6M309 232.2L343 232.9M309 239.5L343 240.2M309 246.8L343 247.5M309 254.1L343 254.8M309 261.4L343 262.1M309 268.7L343 269.4M309 276L343 276.7M309 283.3L343 284M309 290.6L343 291.3M309 297.9L343 298.6M309 305.2L343 305.9" stroke-width="0.95"/><path d="M299.1 93.3v7.3M317.5 93.7v7.3M336.8 94.1v7.3M293.1 100.5v7.3M308.6 100.8v7.3M325.9 101.1v7.3M302.6 108v7.3M316.9 108.3v7.3M340.4 108.7v7.3M290.4 115v7.3M310.4 115.4v7.3M325.4 115.7v7.3M298 122.5v7.3M317.2 122.9v7.3M336.7 123.3v7.3M291 129.6v7.3M311.8 130.1v7.3M333.8 130.5v7.3M297.4 137.1v7.3M318.2 137.5v7.3M336.1 137.8v7.3M292.6 144.3v7.3M304.4 144.5v7.3M324 144.9v7.3M299.6 151.7v7.3M319.7 152.1v7.3M335.3 152.4v7.3M289.6 158.8v7.3M308 159.2v7.3M330 159.6v7.3M296.9 166.3v7.3M317.3 166.7v7.3M333.5 167v7.3M289.1 173.4v7.3M312.6 173.9v7.3M333.5 174.3v7.3M301.8 181v7.3M318.3 181.3v7.3M335.4 181.6v7.3M291.7 188.1v7.3M310.2 188.4v7.3M332.1 188.9v7.3M299.3 195.5v7.3M314.6 195.8v7.3M335.9 196.2v7.3M289.8 202.6v7.3M308.3 203v7.3M324.5 203.3v7.3M297.4 210.1v7.3M318.7 210.5v7.3M337.7 210.9v7.3M290.3 217.2v7.3M308.3 217.6v7.3M325.4 217.9v7.3M297.3 224.7v7.3M314.8 225v7.3M335.9 225.4v7.3M288.7 231.8v7.3M313.3 232.3v7.3M331.4 232.6v7.3M300.9 239.3v7.3M319.1 239.7v7.3M336.6 240.1v7.3M288.2 246.4v7.3M306.6 246.8v7.3M322.7 247.1v7.3M301.5 254v7.3M320.9 254.3v7.3M340.4 254.7v7.3M290.1 261v7.3M308.6 261.4v7.3M328.7 261.8v7.3M300.4 268.5v7.3M321.1 268.9v7.3M337.6 269.3v7.3M292 275.7v7.3M310.2 276v7.3M325.9 276.3v7.3M301.3 283.1v7.3M316.3 283.4v7.3M333.4 283.8v7.3M289.1 290.2v7.3M308 290.6v7.3M323.3 290.9v7.3M300.8 297.7v7.3M322.6 298.2v7.3M336 298.4v7.3M292.2 304.9v7.3M307.4 305.2v7.3M329.8 305.6v7.3" stroke-width="0.9"/></g><path d="M343.0 125.0 L409.0 128.0 L409.0 402.0 L343.0 402.0 Z" fill="#fff" stroke="#000" stroke-width="1.4" stroke-linejoin="round"/><line x1="345.0" y1="131.0" x2="407.0" y2="131.0" stroke="#000" stroke-width="1.2"/><line x1="345.0" y1="168.0" x2="407.0" y2="168.0" stroke="#000" stroke-width="1.2"/><line x1="345.0" y1="188.7" x2="407.0" y2="188.7" stroke="#000" stroke-width="1.2"/><line x1="345.0" y1="197.8" x2="407.0" y2="197.8" stroke="#000" stroke-width="1.2"/><line x1="345.0" y1="234.0" x2="407.0" y2="234.0" stroke="#000" stroke-width="1.2"/><line x1="345.0" y1="238.8" x2="407.0" y2="238.8" stroke="#000" stroke-width="1.2"/><line x1="345.0" y1="259.0" x2="407.0" y2="259.0" stroke="#000" stroke-width="1.2"/><line x1="345.0" y1="295.6" x2="407.0" y2="295.6" stroke="#000" stroke-width="1.2"/><line x1="345.0" y1="335.0" x2="407.0" y2="335.0" stroke="#000" stroke-width="1.2"/><line x1="345.0" y1="358.0" x2="407.0" y2="358.0" stroke="#000" stroke-width="1.2"/><line x1="345.0" y1="380.0" x2="407.0" y2="380.0" stroke="#000" stroke-width="1.2"/><line x1="345.0" y1="394.5" x2="407.0" y2="394.5" stroke="#000" stroke-width="1.2"/><line x1="347.8" y1="131.0" x2="347.8" y2="394.5" stroke="#000" stroke-width="1.2"/><line x1="368.0" y1="131.0" x2="368.0" y2="394.5" stroke="#000" stroke-width="1.2"/><line x1="386.5" y1="131.0" x2="386.5" y2="394.5" stroke="#000" stroke-width="1.2"/><line x1="405.0" y1="131.0" x2="405.0" y2="394.5" stroke="#000" stroke-width="1.2"/><path d="M345.0 403.5 L384.0 403.5 L384.0 420.0 L345.0 420.0 Z" fill="#fff" stroke="#000" stroke-width="1.2" stroke-linejoin="round"/><line x1="349.0" y1="404.0" x2="349.0" y2="419.0" stroke="#000" stroke-width="1.1"/><line x1="355.0" y1="404.0" x2="355.0" y2="419.0" stroke="#000" stroke-width="1.1"/><line x1="361.0" y1="404.0" x2="361.0" y2="419.0" stroke="#000" stroke-width="1.1"/><line x1="367.0" y1="404.0" x2="367.0" y2="419.0" stroke="#000" stroke-width="1.1"/><line x1="373.0" y1="404.0" x2="373.0" y2="419.0" stroke="#000" stroke-width="1.1"/><line x1="379.0" y1="404.0" x2="379.0" y2="419.0" stroke="#000" stroke-width="1.1"/><path d="M324.3 104.0 L360.7 104.0 L360.7 121.6 L343.7 121.6 L343.7 126.0 L324.3 126.0 Z" fill="#fff" stroke="#000" stroke-width="1.3" stroke-linejoin="round"/><path d="M362 92 V118 Q362 124 372 132 L383 141 Q388 145 388 152 V405 H397 V150 Q397 140 389 133 L377 123 Q371 118 371 112 V92 Z" fill="#fff" stroke="#000" stroke-width="1.4" stroke-linejoin="round" stroke-linecap="round"/><path d="M353.0 56.0 L595.0 56.0 L595.0 62.0 L353.0 62.0 Z" fill="#fff" stroke="#000" stroke-width="1.3" stroke-linejoin="round"/><path d="M389.0 62.0 L595.0 62.0 L595.0 71.0 L389.0 72.4 Z" fill="#fff" stroke="#000" stroke-width="1.4" stroke-linejoin="round"/><path d="M410.7 62.0 L424.7 62.0 L424.7 300.0 L410.7 300.0 Z" fill="#fff" stroke="#000" stroke-width="1.5" stroke-linejoin="round"/><path d="M355.0 65.0 L379.5 56.0 L396.0 56.0 L388.6 73.5 L370.3 95.5 L362.0 80.0 Z" fill="#fff" stroke="#000" stroke-width="1.4" stroke-linejoin="round"/><path d="M364.3 72 Q372 64 379.5 56 M376.4 64.3 Q377 80 374 90 M390.8 87 L408.3 100 M409.8 62 L420 56" fill="none" stroke="#000" stroke-width="1.4" stroke-linejoin="round" stroke-linecap="round"/><path d="M371.0 96.0 L410.0 96.0 L410.0 101.5 L371.0 101.5 Z" fill="#fff" stroke="#000" stroke-width="1.3" stroke-linejoin="round"/><path d="M424.7 96.0 L450.0 96.0 L450.0 101.5 L424.7 101.5 Z" fill="#fff" stroke="#000" stroke-width="1.3" stroke-linejoin="round"/><path d="M424.7 107.0 L455.0 107.0 L455.0 116.0 L424.7 116.0 Z" fill="#fff" stroke="#000" stroke-width="1.3" stroke-linejoin="round"/><path d="M511.0 92.3 L595.0 92.3 L595.0 100.7 L511.0 100.7 Z" fill="#fff" stroke="#000" stroke-width="1.4" stroke-linejoin="round"/><path d="M508.0 111.8 L595.0 111.8 L595.0 120.2 L508.0 120.2 Z" fill="#fff" stroke="#000" stroke-width="1.4" stroke-linejoin="round"/><path d="M550.0 131.4 L595.0 131.4 L595.0 139.8 L550.0 139.8 Z" fill="#fff" stroke="#000" stroke-width="1.4" stroke-linejoin="round"/><path d="M539.0 92.0 L544.7 92.0 L544.7 123.0 L539.0 123.0 Z" fill="#fff" stroke="#000" stroke-width="1.3" stroke-linejoin="round"/><path d="M553.0 96.0 L558.7 96.0 L558.7 153.7 L553.0 153.7 Z" fill="#fff" stroke="#000" stroke-width="1.3" stroke-linejoin="round"/><clipPath id="cb4"><polygon points="558.7,153.7 595,153.7 595,330 558.7,330"/></clipPath><g clip-path="url(#cb4)" fill="none" stroke="#000"><path d="M555 136L595 136M555 142.8L595 142.8M555 149.6L595 149.6M555 156.4L595 156.4M555 163.2L595 163.2M555 170L595 170M555 176.8L595 176.8M555 183.6L595 183.6M555 190.4L595 190.4M555 197.2L595 197.2M555 204L595 204M555 210.8L595 210.8M555 217.6L595 217.6M555 224.4L595 224.4M555 231.2L595 231.2M555 238L595 238M555 244.8L595 244.8M555 251.6L595 251.6M555 258.4L595 258.4M555 265.2L595 265.2M555 272L595 272M555 278.8L595 278.8M555 285.6L595 285.6M555 292.4L595 292.4M555 299.2L595 299.2M555 306L595 306M555 312.8L595 312.8M555 319.6L595 319.6M555 326.4L595 326.4M555 333.2L595 333.2" stroke-width="0.9"/><path d="M538.4 136v6.8M555.3 136v6.8M571 136v6.8M582.7 136v6.8M548.2 142.8v6.8M559.5 142.8v6.8M576.1 142.8v6.8M593.2 142.8v6.8M535.5 149.6v6.8M553.7 149.6v6.8M568.6 149.6v6.8M584 149.6v6.8M546.3 156.4v6.8M562.8 156.4v6.8M578.2 156.4v6.8M596.7 156.4v6.8M537.5 163.2v6.8M556.5 163.2v6.8M572.1 163.2v6.8M587 163.2v6.8M550.4 170v6.8M567 170v6.8M582.7 170v6.8M539.8 176.8v6.8M554.7 176.8v6.8M567.4 176.8v6.8M584.3 176.8v6.8M546.1 183.6v6.8M560.3 183.6v6.8M575.1 183.6v6.8M593.6 183.6v6.8M539.2 190.4v6.8M552 190.4v6.8M567.1 190.4v6.8M584.9 190.4v6.8M547.8 197.2v6.8M566.9 197.2v6.8M578.8 197.2v6.8M540.1 204v6.8M557.6 204v6.8M572.9 204v6.8M593.9 204v6.8M543.2 210.8v6.8M559.3 210.8v6.8M575.8 210.8v6.8M591.3 210.8v6.8M541.3 217.6v6.8M556.6 217.6v6.8M573.7 217.6v6.8M589.3 217.6v6.8M544.2 224.4v6.8M561.3 224.4v6.8M579.5 224.4v6.8M536.8 231.2v6.8M555.7 231.2v6.8M571.5 231.2v6.8M583.2 231.2v6.8M545.9 238v6.8M560.5 238v6.8M575.5 238v6.8M589.8 238v6.8M542.2 244.8v6.8M554.2 244.8v6.8M569.4 244.8v6.8M582.7 244.8v6.8M545.6 251.6v6.8M564.9 251.6v6.8M582 251.6v6.8M540.2 258.4v6.8M556.4 258.4v6.8M571.3 258.4v6.8M588.7 258.4v6.8M551 265.2v6.8M562.6 265.2v6.8M582.6 265.2v6.8M591.6 265.2v6.8M541.3 272v6.8M558 272v6.8M571.5 272v6.8M581.5 272v6.8M545.3 278.8v6.8M559.6 278.8v6.8M578.4 278.8v6.8M591.9 278.8v6.8M538.7 285.6v6.8M556.5 285.6v6.8M572.7 285.6v6.8M586.6 285.6v6.8M548 292.4v6.8M565.9 292.4v6.8M579.3 292.4v6.8M593.1 292.4v6.8M537.8 299.2v6.8M556.2 299.2v6.8M577.1 299.2v6.8M589.2 299.2v6.8M545.7 306v6.8M559.2 306v6.8M578.9 306v6.8M596.2 306v6.8M537.2 312.8v6.8M558.9 312.8v6.8M573.3 312.8v6.8M587.8 312.8v6.8M549.3 319.6v6.8M562.7 319.6v6.8M577.7 319.6v6.8M596.6 319.6v6.8M539.7 326.4v6.8M559.8 326.4v6.8M574.6 326.4v6.8M589.1 326.4v6.8M548.3 333.2v6.8M562 333.2v6.8M575.5 333.2v6.8M586.5 333.2v6.8" stroke-width="0.9"/></g><path d="M547.5 148.0 L660.0 148.0 L660.0 153.7 L547.5 153.7 Z" fill="#fff" stroke="#000" stroke-width="1.4" stroke-linejoin="round"/><path d="M565.7 160.0 L571.4 160.0 L571.4 470.0 L565.7 470.0 Z" fill="#fff" stroke="#000" stroke-width="1.3" stroke-linejoin="round"/><path d="M410.7 139.8 L474.4 56.0 L487.0 56.0 L424.7 148.0 Z" fill="#fff" stroke="#000" stroke-width="1.5" stroke-linejoin="round"/><path d="M486.0 79.0 L504.0 56.0 L516.0 56.0 L494.0 84.0 Z" fill="#fff" stroke="#000" stroke-width="1.4" stroke-linejoin="round"/><path d="M591.5 56.0 L606.0 56.0 L606.0 485.0 L591.5 485.0 Z" fill="#fff" stroke="#000" stroke-width="1.6" stroke-linejoin="round"/><path d="M603.3 56.0 L614.0 56.0 L642.0 125.0 L642.0 490.0 L630.0 490.0 L630.0 130.0 Z" fill="#fff" stroke="#000" stroke-width="1.5" stroke-linejoin="round"/><path d="M627.0 61.6 L660.0 61.6 L660.0 78.3 L627.0 78.3 Z" fill="#fff" stroke="#000" stroke-width="1.3" stroke-linejoin="round"/><path d="M631.0 86.7 L660.0 86.7 L660.0 95.0 L631.0 95.0 Z" fill="#fff" stroke="#000" stroke-width="1.3" stroke-linejoin="round"/><clipPath id="cb5"><polygon points="658,56 753.5,56 771,445 771,450 656,462 656,389 648,389 646,87 658,87"/></clipPath><g clip-path="url(#cb5)" fill="none" stroke="#1a1a1a"><path d="M636 -42L775 -119.8M636 -31.8L775 -109.6M636 -21.6L775 -99.4M636 -11.4L775 -89.2M636 -1.2L775 -79M636 9L775 -68.8M636 19.2L775 -58.6M636 29.4L775 -48.4M636 39.6L775 -38.2M636 49.8L775 -28M636 60L775 -17.4M636 70.2L775 -5.9M636 80.4L775 5.5M636 90.6L775 16.9M636 100.8L775 28.4M636 111L775 39.8M636 121.2L775 51.2M636 131.4L775 62.7M636 141.6L775 74.1M636 151.8L775 85.5M636 162L775 97M636 172.2L775 108.4M636 182.4L775 119.8M636 192.6L775 131.3M636 202.8L775 142.7M636 213L775 154.1M636 223.2L775 165.6M636 233.4L775 177M636 243.6L775 188.4M636 253.8L775 199.9M636 264L775 211.3M636 274.2L775 222.7M636 284.4L775 234.2M636 294.6L775 245.6M636 304.8L775 257M636 315L775 268.5M636 325.2L775 279.9M636 335.4L775 291.3M636 345.6L775 302.8M636 355.8L775 314.2M636 366L775 325.6M636 376.2L775 337.1M636 386.4L775 348.5M636 396.6L775 359.9M636 406.8L775 371.4M636 417L775 382.8M636 427.2L775 394.2M636 437.4L775 405.7M636 447.6L775 417.1M636 457.8L775 428.5M636 468L775 440M636 478.2L775 450.4M636 488.4L775 460.6M636 498.6L775 470.8M636 508.8L775 481M636 519L775 491.2M636 529.2L775 501.4M636 539.4L775 511.6M636 549.6L775 521.8" stroke-width="0.9"/><path d="M614.1 -29.7v10.2M637.8 -43v10.2M660.4 -55.7v10.2M671.6 -61.9v10.2M695.4 -75.3v10.2M711.1 -84v10.2M728.4 -93.7v10.2M742.5 -101.7v10.2M765.9 -114.7v10.2M624.9 -25.6v10.2M642 -35.1v10.2M661.7 -46.2v10.2M679.7 -56.3v10.2M693.7 -64.1v10.2M715.2 -76.2v10.2M734.7 -87.1v10.2M757.5 -99.9v10.2M776.2 -110.3v10.2M613.8 -9.2v10.2M629.3 -17.9v10.2M651.3 -30.2v10.2M670.1 -40.7v10.2M689.8 -51.7v10.2M708.3 -62.1v10.2M728.6 -73.5v10.2M751 -86v10.2M767.1 -95v10.2M630 -8v10.2M643.8 -15.8v10.2M660.5 -25.1v10.2M680.4 -36.3v10.2M707.2 -51.3v10.2M722.7 -59.9v10.2M738.2 -68.7v10.2M755 -78.1v10.2M621.4 7v10.2M636.9 -1.7v10.2M654.8 -11.7v10.2M671.4 -21v10.2M689.7 -31.3v10.2M716.5 -46.3v10.2M733.5 -55.8v10.2M751.6 -65.9v10.2M775.2 -79.1v10.2M626.5 14.3v10.2M647.4 2.6v10.2M664.7 -7.1v10.2M686 -19v10.2M704.5 -29.3v10.2M724.9 -40.8v10.2M742.3 -50.5v10.2M759.4 -60.1v10.2M619 28.7v10.2M634.9 19.8v10.2M656.3 7.8v10.2M669.1 0.6v10.2M691.7 -12v10.2M714.2 -24.6v10.2M735.1 -36.3v10.2M748.4 -43.7v10.2M772.2 -57.1v10.2M623.1 36.6v10.2M641.4 26.4v10.2M662.9 14.3v10.2M678.3 5.7v10.2M704.1 -8.7v10.2M719.5 -17.4v10.2M741.2 -29.5v10.2M756.1 -37.8v10.2M616.6 50.4v10.2M633.4 41.1v10.2M651.8 30.7v10.2M667.5 22v10.2M685.6 11.8v10.2M708.6 -1.1v10.2M723.5 -9.4v10.2M745.6 -21.8v10.2M761.4 -30.6v10.2M624.7 56.1v10.2M646.4 44v10.2M660.3 36.2v10.2M681.7 24.2v10.2M700.9 13.4v10.2M722.4 1.4v10.2M740.3 -8.6v10.2M760.6 -20v10.2M619.5 69.2v10.2M634.6 60.8v10.2M653.9 50v10.2M674.6 38.5v10.2M691.3 29.2v10.2M713.3 17v10.2M726.3 9.7v10.2M749.2 -3v10.2M771 -15.1v10.2M629.5 73.8v10.2M645.1 65.2v10.2M666.8 53.3v10.2M685.8 42.9v10.2M698.8 35.8v10.2M722.6 22.8v10.2M744.4 10.8v10.2M757.5 3.6v10.2M615.1 91.7v10.2M637.6 79.5v10.2M651.3 72.1v10.2M676.3 58.7v10.2M690 51.3v10.2M712.6 39.1v10.2M736.6 26.2v10.2M755.9 15.8v10.2M769.2 8.7v10.2M628.4 94.6v10.2M640.7 88.1v10.2M658.9 78.5v10.2M681.8 66.4v10.2M699.7 56.8v10.2M716 48.2v10.2M740.4 35.3v10.2M756.5 26.7v10.2M615.5 111.5v10.2M633.4 102.1v10.2M653.3 91.8v10.2M673.5 81.2v10.2M692.3 71.5v10.2M704.6 65.1v10.2M726.7 53.6v10.2M745.6 43.7v10.2M761.5 35.4v10.2M627.4 115.4v10.2M646.6 105.6v10.2M668.2 94.5v10.2M686.5 85.1v10.2M700.2 78.1v10.2M716.7 69.7v10.2M737.3 59.1v10.2M757.5 48.8v10.2M619.6 129.4v10.2M637.6 120.4v10.2M654.3 112v10.2M676.5 100.8v10.2M694.7 91.7v10.2M706 86v10.2M728.8 74.5v10.2M746.7 65.5v10.2M765.1 56.2v10.2M624.5 137.1v10.2M646 126.4v10.2M664.3 117.4v10.2M677.7 110.8v10.2M697.7 100.9v10.2M715.6 92v10.2M737.6 81.2v10.2M756.6 71.8v10.2M618.1 150.3v10.2M635.1 142v10.2M653.4 133.2v10.2M671.5 124.3v10.2M695.5 112.7v10.2M713.8 103.8v10.2M732.5 94.8v10.2M750.7 85.9v10.2M771.8 75.6v10.2M624.4 157.3v10.2M645.6 147.2v10.2M663.1 138.9v10.2M688.2 126.9v10.2M705 118.9v10.2M719.2 112.1v10.2M743.3 100.7v10.2M758.4 93.5v10.2M615.9 171.4v10.2M634.8 162.6v10.2M658 151.7v10.2M672.6 144.9v10.2M690.8 136.4v10.2M710.2 127.3v10.2M731.3 117.4v10.2M750.6 108.4v10.2M768 100.3v10.2M626.6 176.5v10.2M644.1 168.5v10.2M662.6 160v10.2M679.6 152.2v10.2M696.3 144.5v10.2M714.3 136.3v10.2M738.2 125.3v10.2M755.7 117.2v10.2M773.3 109.2v10.2M618.4 190.3v10.2M632.8 183.8v10.2M648.9 176.6v10.2M668.2 167.9v10.2M690.1 158.1v10.2M706.1 150.9v10.2M724.7 142.5v10.2M742.5 134.5v10.2M765.1 124.3v10.2M628.1 196.1v10.2M645.8 188.3v10.2M664.3 180.1v10.2M682.7 172v10.2M696.4 165.9v10.2M714.6 157.9v10.2M732.9 149.9v10.2M751.8 141.5v10.2M772.3 132.5v10.2M619.8 209.8v10.2M633.4 203.9v10.2M658.6 193v10.2M672.9 186.8v10.2M694.2 177.6v10.2M712.6 169.7v10.2M732.3 161.2v10.2M749.5 153.7v10.2M763.9 147.5v10.2M627.3 216.7v10.2M642.4 210.3v10.2M660.7 202.5v10.2M679.1 194.7v10.2M703.5 184.4v10.2M723 176.2v10.2M739.6 169.1v10.2M763 159.2v10.2M615.1 231.8v10.2M639.8 221.6v10.2M653.9 215.8v10.2M675.9 206.7v10.2M698.4 197.3v10.2M716.4 189.9v10.2M734.6 182.3v10.2M755.9 173.5v10.2M775.3 165.4v10.2M626.3 237.3v10.2M649.4 227.9v10.2M666 221.2v10.2M688.7 212v10.2M706.2 204.9v10.2M732.4 194.3v10.2M750.9 186.8v10.2M763.7 181.6v10.2M615.9 251.6v10.2M638.1 242.8v10.2M655.6 235.8v10.2M678.9 226.6v10.2M699.8 218.3v10.2M715.8 211.9v10.2M735.2 204.2v10.2M753 197.2v10.2M776.4 187.9v10.2M624.4 258.3v10.2M638.5 252.8v10.2M661.2 244v10.2M680.9 236.4v10.2M697.3 230v10.2M720.8 220.9v10.2M735.8 215.1v10.2M753 208.4v10.2M774.2 200.2v10.2M615.2 271.9v10.2M634.3 264.6v10.2M655.7 256.5v10.2M680 247.3v10.2M692.6 242.5v10.2M716.2 233.6v10.2M735.1 226.4v10.2M758.6 217.5v10.2M777.9 210.2v10.2M625.1 278.2v10.2M642.9 271.6v10.2M668.2 262.3v10.2M685.9 255.7v10.2M700.3 250.4v10.2M719.3 243.4v10.2M739.4 235.9v10.2M761.2 227.8v10.2M614.3 292.3v10.2M636.7 284.1v10.2M656.9 276.9v10.2M678.7 269v10.2M696.3 262.6v10.2M719.1 254.4v10.2M733.7 249.1v10.2M752.2 242.4v10.2M627.7 297.5v10.2M648 290.4v10.2M668.4 283.2v10.2M682.9 278.1v10.2M702 271.3v10.2M728.8 261.9v10.2M744 256.5v10.2M759 251.3v10.2M619.1 310.6v10.2M638.2 304v10.2M654.6 298.4v10.2M676.8 290.8v10.2M695 284.5v10.2M711.3 278.9v10.2M734.8 270.9v10.2M751.1 265.2v10.2M771.1 258.4v10.2M626.5 318.2v10.2M645.4 311.9v10.2M663 305.9v10.2M683.1 299.2v10.2M700.4 293.4v10.2M721.2 286.5v10.2M746.7 277.9v10.2M759.2 273.7v10.2M614.4 332.3v10.2M631.4 326.7v10.2M651.7 320.1v10.2M674.8 312.5v10.2M686.8 308.6v10.2M709.4 301.3v10.2M731.3 294.1v10.2M748.8 288.4v10.2M770 281.5v10.2M628.1 337.9v10.2M644.9 332.6v10.2M668.5 325.1v10.2M682.6 320.6v10.2M701.9 314.5v10.2M720.3 308.7v10.2M744.8 300.9v10.2M766.2 294.1v10.2M612.5 352.8v10.2M637.2 345.2v10.2M654.2 340v10.2M672 334.5v10.2M694.5 327.6v10.2M715.3 321.2v10.2M736.2 314.7v10.2M756.1 308.6v10.2M771.3 303.9v10.2M626.5 358.6v10.2M648.4 352.1v10.2M664.8 347.2v10.2M687.5 340.4v10.2M700.5 336.5v10.2M718.4 331.1v10.2M740.9 324.4v10.2M758.4 319.2v10.2M615.5 372v10.2M640 364.8v10.2M655.2 360.4v10.2M679.7 353.3v10.2M699.9 347.4v10.2M719.3 341.8v10.2M738.8 336.1v10.2M755.2 331.4v10.2M628.2 378.4v10.2M642 374.5v10.2M667.4 367.4v10.2M680.6 363.6v10.2M697.6 358.9v10.2M724.3 351.3v10.2M739.6 347v10.2M757.1 342.1v10.2M612.3 392.9v10.2M632.9 387.2v10.2M650.4 382.5v10.2M673.1 376.3v10.2M689.2 371.9v10.2M710.1 366.2v10.2M732.2 360.2v10.2M748.1 355.8v10.2M766.5 350.8v10.2M628.1 398.7v10.2M645.9 394v10.2M664.9 389v10.2M679.8 385v10.2M695 381v10.2M719.8 374.5v10.2M736.6 370.1v10.2M757.1 364.6v10.2M777.3 359.3v10.2M621.9 410.4v10.2M640.4 405.7v10.2M653.6 402.3v10.2M671 397.9v10.2M692.8 392.3v10.2M708.6 388.3v10.2M726.9 383.6v10.2M743.3 379.4v10.2M765.9 373.7v10.2M626.9 419.2v10.2M641.2 415.7v10.2M663.9 410.1v10.2M685.2 404.9v10.2M707.4 399.4v10.2M725.7 394.9v10.2M738.8 391.7v10.2M761.1 386.2v10.2M615.6 432v10.2M633.3 427.9v10.2M659.4 421.6v10.2M670 419.1v10.2M690.2 414.3v10.2M714.4 408.6v10.2M727.6 405.5v10.2M745.5 401.2v10.2M768.1 395.9v10.2M630.5 438.7v10.2M649.6 434.3v10.2M661.4 431.6v10.2M683.9 426.5v10.2M699.7 422.9v10.2M722 417.8v10.2M742.1 413.2v10.2M759 409.3v10.2M619 451.3v10.2M634 448v10.2M651.7 444.2v10.2M672.3 439.6v10.2M693 435.1v10.2M710.2 431.3v10.2M730.8 426.8v10.2M743.4 424v10.2M766.1 419.1v10.2M627.6 459.6v10.2M642.2 456.5v10.2M663.9 451.9v10.2M683 447.9v10.2M697.4 444.9v10.2M719.3 440.3v10.2M739.8 435.9v10.2M753.5 433.1v10.2M615 472.2v10.2M635.2 468.2v10.2M651.6 464.9v10.2M674.8 460.2v10.2M689.3 457.2v10.2M713.6 452.3v10.2M728 449.4v10.2M748.8 445.2v10.2M771.9 440.6v10.2M629 479.6v10.2M640.9 477.2v10.2M667.5 471.9v10.2M678.6 469.7v10.2M703.7 464.7v10.2M719.5 461.5v10.2M739.9 457.4v10.2M757.6 453.9v10.2M617.1 492.2v10.2M636.3 488.3v10.2M649.8 485.6v10.2M669.9 481.6v10.2M688.5 477.9v10.2M714.9 472.6v10.2M728.4 469.9v10.2M753.3 464.9v10.2M773.1 461v10.2M629.3 499.9v10.2M640.6 497.7v10.2M661.7 493.5v10.2M678 490.2v10.2M698.1 486.2v10.2M724.7 480.9v10.2M738.1 478.2v10.2M758.3 474.1v10.2M619.3 512.1v10.2M633.4 509.3v10.2M653.8 505.2v10.2M675.2 501v10.2M688.7 498.3v10.2M710.1 494v10.2M726.5 490.7v10.2M748.7 486.3v10.2M760.2 484v10.2M628.1 520.6v10.2M646 517v10.2M665.9 513v10.2M687.9 508.6v10.2M706.9 504.8v10.2M727.9 500.6v10.2M741.3 497.9v10.2M767.5 492.7v10.2M616 533.2v10.2M638.8 528.6v10.2M657.1 525v10.2M676.1 521.2v10.2M692.4 517.9v10.2M718.2 512.8v10.2M737.5 508.9v10.2M756.7 505.1v10.2M625.7 541.5v10.2M644.8 537.6v10.2M660.4 534.5v10.2M686.5 529.3v10.2M703.6 525.9v10.2M724.7 521.7v10.2M742 518.2v10.2M761.8 514.2v10.2M616.4 553.5v10.2M640.4 548.7v10.2M654.5 545.9v10.2M674.2 542v10.2M693.9 538v10.2M716.8 533.4v10.2M732.9 530.2v10.2M752.3 526.3v10.2M770.8 522.6v10.2" stroke-width="0.9"/></g><clipPath id="cb6"><polygon points="753.5,56 787,56 807.7,445 771,445"/></clipPath><g clip-path="url(#cb6)" fill="none" stroke="#000"><path d="M750 36.8L815 41.3M750 47.4L815 52M750 58L815 62.5M750 68.6L815 73.1M750 79.2L815 83.8M750 89.8L815 94.3M750 100.4L815 105M750 111L815 115.5M750 121.6L815 126.1M750 132.2L815 136.8M750 142.8L815 147.4M750 153.4L815 157.9M750 164L815 168.6M750 174.6L815 179.2M750 185.2L815 189.8M750 195.8L815 200.3M750 206.4L815 211M750 217L815 221.6M750 227.6L815 232.2M750 238.2L815 242.8M750 248.8L815 253.3M750 259.4L815 263.9M750 270L815 274.6M750 280.6L815 285.2M750 291.2L815 295.8M750 301.8L815 306.3M750 312.4L815 316.9M750 323L815 327.6M750 333.6L815 338.1M750 344.2L815 348.8M750 354.8L815 359.4M750 365.4L815 369.9M750 376L815 380.6M750 386.6L815 391.1M750 397.2L815 401.8M750 407.8L815 412.4M750 418.4L815 422.9M750 429L815 433.6M750 439.6L815 444.1M750 450.2L815 454.8M750 460.8L815 465.4" stroke-width="1.4"/><path d="M732.8 35.6v10.6M749.4 36.8v10.6M769.7 38.2v10.6M789.8 39.6v10.6M806.8 40.8v10.6M740.7 46.7v10.6M760.2 48.1v10.6M779.1 49.4v10.6M798.7 50.8v10.6M729.3 56.6v10.6M746.5 57.8v10.6M765.2 59.1v10.6M783.4 60.3v10.6M804.6 61.8v10.6M740.9 68v10.6M758.6 69.2v10.6M778 70.6v10.6M796.9 71.9v10.6M814.6 73.1v10.6M731.4 77.9v10.6M752.1 79.3v10.6M773.7 80.9v10.6M792.3 82.2v10.6M809.2 83.3v10.6M739.5 89.1v10.6M758.8 90.4v10.6M775.5 91.6v10.6M794.6 92.9v10.6M812.4 94.2v10.6M729 98.9v10.6M747.7 100.2v10.6M765.4 101.5v10.6M783.4 102.7v10.6M801.1 104v10.6M740 110.3v10.6M756.9 111.5v10.6M777.2 112.9v10.6M796.6 114.3v10.6M813.4 115.4v10.6M730.3 120.2v10.6M750 121.6v10.6M769.7 123v10.6M790.9 124.5v10.6M807.2 125.6v10.6M738.9 131.4v10.6M758 132.8v10.6M776.2 134v10.6M793.4 135.2v10.6M812 136.5v10.6M730.4 141.4v10.6M751.3 142.9v10.6M767.9 144.1v10.6M788.6 145.5v10.6M809.9 147v10.6M739.8 152.7v10.6M757.5 153.9v10.6M776.5 155.3v10.6M792.7 156.4v10.6M812.5 157.8v10.6M731.1 162.7v10.6M750.4 164v10.6M768.9 165.3v10.6M786.2 166.5v10.6M807.9 168.1v10.6M738.8 173.8v10.6M756.7 175.1v10.6M777 176.5v10.6M795.1 177.8v10.6M814.8 179.1v10.6M730.2 183.8v10.6M750.8 185.3v10.6M770.5 186.6v10.6M790.8 188.1v10.6M809.5 189.4v10.6M738.3 195v10.6M755.8 196.2v10.6M772.9 197.4v10.6M793.7 198.9v10.6M814.1 200.3v10.6M729.9 205v10.6M746.9 206.2v10.6M766.9 207.6v10.6M786 208.9v10.6M803.9 210.2v10.6M740.3 216.3v10.6M757.6 217.5v10.6M778.6 219v10.6M797.3 220.3v10.6M728.8 226.1v10.6M747.4 227.4v10.6M764 228.6v10.6M781.7 229.8v10.6M801.4 231.2v10.6M738.7 237.4v10.6M759.6 238.9v10.6M777.9 240.2v10.6M797.9 241.6v10.6M813.9 242.7v10.6M731.2 247.5v10.6M750.8 248.9v10.6M770.3 250.2v10.6M790 251.6v10.6M811 253.1v10.6M741.4 258.8v10.6M758.8 260v10.6M778.3 261.4v10.6M797.7 262.7v10.6M733 268.8v10.6M752 270.1v10.6M769 271.3v10.6M789.3 272.7v10.6M810.1 274.2v10.6M738.4 279.8v10.6M760 281.3v10.6M778 282.6v10.6M795.1 283.8v10.6M814.1 285.1v10.6M729.8 289.8v10.6M748.7 291.1v10.6M769.1 292.5v10.6M785.5 293.7v10.6M805.6 295.1v10.6M740.1 301.1v10.6M758.8 302.4v10.6M779 303.8v10.6M795.7 305v10.6M732.1 311.1v10.6M752.3 312.6v10.6M772.7 314v10.6M789.2 315.1v10.6M807.1 316.4v10.6M738.9 322.2v10.6M756.9 323.5v10.6M777.9 325v10.6M796.1 326.2v10.6M730.1 332.2v10.6M748.7 333.5v10.6M768.7 334.9v10.6M788.8 336.3v10.6M808.6 337.7v10.6M741.4 343.6v10.6M761.3 345v10.6M781.6 346.4v10.6M800.6 347.7v10.6M733.1 353.6v10.6M751.2 354.9v10.6M768.9 356.1v10.6M788.3 357.5v10.6M805 358.7v10.6M740.3 364.7v10.6M758.7 366v10.6M780 367.5v10.6M795.4 368.6v10.6M732.2 374.8v10.6M751.3 376.1v10.6M769.3 377.4v10.6M787.9 378.7v10.6M804.8 379.8v10.6M739.1 385.8v10.6M758.2 387.2v10.6M779.3 388.6v10.6M797.2 389.9v10.6M815.8 391.2v10.6M728.5 395.7v10.6M748.7 397.1v10.6M768.3 398.5v10.6M789.6 400v10.6M806.6 401.2v10.6M741.9 407.2v10.6M761 408.6v10.6M779.2 409.8v10.6M797.4 411.1v10.6M730.5 417v10.6M750.3 418.4v10.6M768.7 419.7v10.6M788.5 421.1v10.6M805.6 422.3v10.6M739.9 428.3v10.6M759.7 429.7v10.6M779.4 431.1v10.6M798.6 432.4v10.6M729.1 438.1v10.6M750.4 439.6v10.6M770.5 441v10.6M789.4 442.4v10.6M808.5 443.7v10.6M740.1 449.5v10.6M758.2 450.8v10.6M776.6 452.1v10.6M796.2 453.4v10.6M813.3 454.6v10.6M730.8 459.5v10.6M751 460.9v10.6M770.3 462.2v10.6M788.1 463.5v10.6M806.8 464.8v10.6" stroke-width="1.5"/></g><line x1="753.5" y1="56.0" x2="771.0" y2="445.0" stroke="#000" stroke-width="1.6"/><path d="M787 56 L808 490 M800 56 V163 M805 56 V163 M805 77 L815 72 M805 107.6 L815 103 M797 163 H815 M797 171 H815 M801 171 L815 470" fill="none" stroke="#000" stroke-width="1.5" stroke-linejoin="round" stroke-linecap="round"/><defs><radialGradient id="wash"><stop offset="0" stop-color="#fff" stop-opacity="0.55"/><stop offset="1" stop-color="#fff" stop-opacity="0"/></radialGradient></defs><ellipse cx="690" cy="250" rx="45" ry="190" transform="rotate(20 690 250)" fill="url(#wash)"/><path d="M627.0 62.5 L658.0 62.5 L658.0 87.0 L627.0 87.0 Z" fill="#fff" stroke="#000" stroke-width="1.4" stroke-linejoin="round"/><path d="M630.7 141.0 L663.0 141.0 L663.0 159.0 L630.7 159.0 Z" fill="#fff" stroke="#000" stroke-width="1.4" stroke-linejoin="round"/><line x1="636.0" y1="100.0" x2="646.0" y2="100.0" stroke="#000" stroke-width="1.2"/><line x1="636.0" y1="300.0" x2="648.0" y2="300.0" stroke="#000" stroke-width="1.2"/><path d="M722.0 444.5 L772.0 444.0 L772.0 466.0 L722.0 466.0 Z" fill="#fff" stroke="#000" stroke-width="1.3" stroke-linejoin="round"/><line x1="725.0" y1="445.0" x2="725.0" y2="466.0" stroke="#000" stroke-width="1.2"/><line x1="731.0" y1="445.0" x2="731.0" y2="466.0" stroke="#000" stroke-width="1.2"/><line x1="737.0" y1="445.0" x2="737.0" y2="466.0" stroke="#000" stroke-width="1.2"/><line x1="743.0" y1="445.0" x2="743.0" y2="466.0" stroke="#000" stroke-width="1.2"/><line x1="749.0" y1="445.0" x2="749.0" y2="466.0" stroke="#000" stroke-width="1.2"/><line x1="755.0" y1="445.0" x2="755.0" y2="466.0" stroke="#000" stroke-width="1.2"/><line x1="761.0" y1="445.0" x2="761.0" y2="466.0" stroke="#000" stroke-width="1.2"/><line x1="767.0" y1="445.0" x2="767.0" y2="466.0" stroke="#000" stroke-width="1.2"/><path d="M623.0 422.5 L638.4 422.5 L638.4 464.0 L623.0 464.0 Z" fill="#fff" stroke="#000" stroke-width="1.3" stroke-linejoin="round"/><path d="M638.0 467.7 L674.5 469.0 L686.0 540.0 L610.0 540.0 L610.0 468.0 Z" fill="#fff" stroke="#000" stroke-width="1.4" stroke-linejoin="round"/><path d="M674.5 466.0 L720.0 466.0 L720.0 496.0 L677.0 494.8 Z" fill="#fff" stroke="#000" stroke-width="1.3" stroke-linejoin="round"/><path d="M720.0 466.0 L770.0 466.0 L770.0 497.0 L720.0 497.0 Z" fill="#fff" stroke="#000" stroke-width="1.4" stroke-linejoin="round"/><path d="M770.0 443.0 L812.5 443.0 L812.5 492.0 L770.0 492.0 Z" fill="#fff" stroke="#000" stroke-width="1.4" stroke-linejoin="round"/><line x1="677.0" y1="494.8" x2="815.0" y2="501.0" stroke="#000" stroke-width="1.4"/><path d="M684.8 522 L815 541 M685 531 Q760 545 815 552 M561 544 L815 556.7 M640 549 L815 559" fill="none" stroke="#000" stroke-width="1.4" stroke-linejoin="round" stroke-linecap="round"/><defs><pattern id="tex" width="16" height="16" patternUnits="userSpaceOnUse"><rect width="16" height="16" fill="#e4e4e4"/><circle cx="11" cy="11" r="3" fill="#bcbcbc"/><path d="M1 4 q2 -3 4 0 q2 3 4 0 M10 2 a2.5 2.5 0 1 1 0.1 0 M2 12 q2 2 4 0 t4 0 M12 9 l3 2 M6 7 q1 2 3 1 M13 14 a1.8 1.8 0 1 0 0.1 0 M0 15 l4 -3" fill="none" stroke="#555" stroke-width="0.8"/></pattern><pattern id="tex3" width="14" height="14" patternUnits="userSpaceOnUse"><rect width="14" height="14" fill="#b9b9b9"/><path d="M1 3 q3 -3 6 0 t6 0 M0 9 q3 2 6 0 q3 -2 7 0" fill="none" stroke="#555" stroke-width="0.8"/><rect x="8" y="5" width="4" height="2" fill="#e8e8e8"/><rect x="2" y="11" width="3" height="2" fill="#888"/></pattern><pattern id="tex2" width="12" height="12" patternUnits="userSpaceOnUse"><rect width="12" height="12" fill="#d4d4d4"/><path d="M1 3 q2 -2 4 0 t4 0 M0 8 q3 2 5 0 q2 -2 5 0 M9 5 l2 1" fill="none" stroke="#555" stroke-width="0.7"/><rect x="3" y="9" width="3" height="2" fill="#999"/><rect x="7" y="1" width="3" height="2" fill="#f4f4f4"/></pattern></defs><path d="M388.0 240.6 L427.0 240.6 L434.5 276.6 L429.4 528.8 L445.0 549.0 L300.0 541.0 L210.0 539.0 L183.0 528.0 L209.0 517.0 L257.0 513.0 L311.0 524.0 L340.0 515.0 L365.0 493.0 L384.6 430.0 L388.0 389.0 L386.0 323.0 Z" fill="#fff" stroke="#000" stroke-width="1.5" stroke-linejoin="round"/><path d="M400 250 Q398 400 377 492 Q355 515 320 528 M410 251 Q405 420 387 498 Q370 520 338 533 M429 261 Q418 420 400 508 Q390 525 368 536 M420 255 Q422 400 410 525" fill="none" stroke="#000" stroke-width="1.3" stroke-linejoin="round" stroke-linecap="round"/><path d="M196 534 Q240 520 290 525 M230 520 L260 530 M308 536 Q360 520 380 480" fill="none" stroke="#000" stroke-width="1.1" stroke-linejoin="round" stroke-linecap="round"/><path d="M430 420 Q420 490 400 540" fill="none" stroke="#000" stroke-width="1.3" stroke-linejoin="round" stroke-linecap="round"/><path d="M496.0 292.0 L506.6 292.0 L537.4 312.6 L583.8 333.0 L604.4 353.8 L620.0 384.7 L625.0 426.0 L632.0 462.0 L643.6 469.0 L628.0 482.0 L612.6 505.0 L612.6 533.5 L599.7 544.0 L540.0 552.0 L500.0 552.0 L488.6 523.7 Z" fill="#fff" stroke="#000" stroke-width="1.5" stroke-linejoin="round"/><path d="M496 292 Q500 400 506.6 528.8 M509 294.6 Q513 330 514 345 M511 310 Q514 335 520 359 M514 340.7 L529.5 340.7 M526 319.5 Q545 340 551 350 Q560 362 566 371 Q572 390 578 389 Q585 400 596 407 M523.4 413.6 Q545 400 560 395.4 Q563 380 566 371 M520 407.5 Q525 440 529.5 480 L545 530 M578 407.5 Q595 440 605 480 L608 525 M560 320 Q575 335 588 340 M589 420 Q600 470 592 520" fill="none" stroke="#000" stroke-width="1.3" stroke-linejoin="round" stroke-linecap="round"/><path d="M434.5 276.6 L501.4 292.0 L488.6 523.7 L429.4 528.8 Z" fill="url(#tex)" stroke="#000" stroke-width="1.5" stroke-linejoin="round"/><path d="M442 292 Q446 315 455 317.8 Q470 325 481 323 Q498 315 499 297" fill="url(#tex)" stroke="#000" stroke-width="1.4" stroke-linejoin="round" stroke-linecap="round"/><path d="M434 335 Q442 362 453 372 Q470 368 488 352 M461.7 392 Q475 370 489 356 M438 470 L475 415 M445 500 L485 455" fill="none" stroke="#000" stroke-width="1.3" stroke-linejoin="round" stroke-linecap="round"/><path d="M429.4 523.7 L465.4 513.4 L491.0 518.5 L496.0 539.0 L480.8 554.5 L445.0 549.0 Z" fill="#fff" stroke="#000" stroke-width="1.5" stroke-linejoin="round"/><path d="M450 540 Q465 530 480 548" fill="none" stroke="#000" stroke-width="1.2" stroke-linejoin="round" stroke-linecap="round"/><path d="M440.0 260.7 L510.2 273.5 L510.2 286.2 L442.0 273.5 Z" fill="url(#tex3)" stroke="#000" stroke-width="1.4" stroke-linejoin="round"/><path d="M442.0 273.5 L510.2 286.2 L501.7 290.5 L440.0 282.0 Z" fill="url(#tex)" stroke="#000" stroke-width="1.2" stroke-linejoin="round"/><path d="M448.6 243.7 L510.2 241.6 L510.2 254.4 L450.7 257.6 Z" fill="url(#tex2)" stroke="#000" stroke-width="1.4" stroke-linejoin="round"/><path d="M444.4 224.6 L461.4 209.7 L484.7 200.2 L508.0 196.0 L521.0 205.5 L518.7 222.5 L510.2 237.4 L448.6 242.7 Z" fill="url(#tex3)" stroke="#000" stroke-width="1.5" stroke-linejoin="round"/><path d="M470 215 L490 232 M500 205 L505 230" fill="none" stroke="#fff" stroke-width="1.0" stroke-linejoin="round" stroke-linecap="round"/><path d="M413.5 179.0 L441.4 185.0 L441.4 212.3 L413.5 209.0 Z" fill="url(#tex)" stroke="#000" stroke-width="1.4" stroke-linejoin="round"/><path d="M500.0 153.7 L530.7 190.0 L544.7 240.0 L553.0 280.0 L540.0 290.0 L522.0 212.0 L511.0 193.7 Z" fill="#fff" stroke="#000" stroke-width="1.4" stroke-linejoin="round"/><path d="M465.0 140.0 L491.0 141.0 L500.0 155.0 L520.0 150.0 L533.4 140.0 L539.5 170.0 L536.3 175.0 L530.7 190.0 L511.0 195.6 L494.5 192.8 L472.0 178.8 L468.0 160.0 Z" fill="#fff" stroke="none" stroke-width="0" stroke-linejoin="round"/><path d="M466 140 Q468 162 480 174 Q492 186 508 194 M497 141 Q500 150 506 155 M497.5 152.5 Q515 170 526.7 184" fill="none" stroke="#000" stroke-width="1.4" stroke-linejoin="round" stroke-linecap="round"/><path d="M533.4 133.8 L524.0 125.0 L530.0 115.5 L545.0 114.0 L551.6 125.0 L548.6 133.8 L551.6 167.0 L545.0 180.0 L536.0 184.0 L530.0 170.0 Z" fill="#fff" stroke="none" stroke-width="0" stroke-linejoin="round"/><path d="M530 133 L538 165 M524 125 L530 115.5 L545 114 L551.6 125 L548.6 133.8 L551 167 Q548 180 536 184" fill="none" stroke="#000" stroke-width="1.4" stroke-linejoin="round" stroke-linecap="round"/><path d="M535.0 164.0 L551.0 165.0 L551.5 171.0 L536.0 170.0 Z" fill="url(#tex2)" stroke="#000" stroke-width="1.2" stroke-linejoin="round"/><path d="M500.0 139.8 L540.0 120.0 L545.0 126.0 L504.0 146.0 Z" fill="#fff" stroke="#000" stroke-width="1.4" stroke-linejoin="round"/><path d="M530.0 122.0 L549.0 112.5 L556.0 122.0 L536.0 131.0 Z" fill="#aaa" stroke="#000" stroke-width="1.3" stroke-linejoin="round"/><path d="M533 120 L540 129 M538 118 L545 127 M543 115 L550 124" fill="none" stroke="#000" stroke-width="0.9" stroke-linejoin="round" stroke-linecap="round"/><path d="M424.0 170.0 L428.7 155.0 L437.8 138.3 L445.4 118.6 L450.0 100.4 L460.5 85.2 L475.7 77.6 L490.9 79.1 L503.0 83.7 L509.0 88.2 L510.6 95.8 L507.6 108.0 L512.2 115.5 L510.6 124.7 L506.0 127.7 L500.0 140.0 L491.0 143.0 L470.0 145.0 L466.0 165.0 L468.0 190.0 L458.0 215.0 L452.6 223.5 L440.0 214.0 L435.8 201.0 L428.0 185.0 Z" fill="#fff" stroke="#000" stroke-width="1.5" stroke-linejoin="round"/><path d="M460.5 100.4 L475.0 96.0 L487.9 97.3 L500.0 106.4 L503.0 118.6 L500.0 130.7 L491.0 141.4 L478.8 144.4 L465.0 135.3 L460.5 115.5 Z" fill="#fff" stroke="none" stroke-width="0" stroke-linejoin="round"/><path d="M475 96 Q490 96 500 106.4 L503 118.6 L500 130.7 Q495 140 486 144 Q472 142 465 135.3" fill="none" stroke="#000" stroke-width="1.3" stroke-linejoin="round" stroke-linecap="round"/><path d="M460.5 100.4 Q475 88 494 100.4 M445 114 Q440 150 445.4 170 M452 130 Q450 170 458 200 M440 160 Q445 190 452 212" fill="none" stroke="#000" stroke-width="1.1" stroke-linejoin="round" stroke-linecap="round"/><path d="M475.7 112 Q481 109.5 486.4 113 M494 116.5 Q498 115 501.5 118.5" fill="none" stroke="#000" stroke-width="2.1" stroke-linejoin="round" stroke-linecap="round"/><path d="M487.9 124.7 L492.4 126.2" fill="none" stroke="#000" stroke-width="1.2" stroke-linejoin="round" stroke-linecap="round"/><path d="M480.3 130.7 Q487 135 494 133.8 Q488 137 483.3 135.3" fill="#fff" stroke="#000" stroke-width="1.4" stroke-linejoin="round" stroke-linecap="round"/><path d="M456 118 q-3 8 0 16 q3 6 4 0 q1 -8 -4 -16" fill="#999" stroke="#000" stroke-width="1.1" stroke-linejoin="round" stroke-linecap="round"/><path d="M340 226 Q355 246 388.8 245 L408 243 L416.4 213 L441.4 212.3 L434.5 276.6 L420 300 L393 300 L388.8 250 Q360 252 342 234 Z" fill="#fff" stroke="#000" stroke-width="1.4" stroke-linejoin="round" stroke-linecap="round"/><line x1="408.0" y1="243.0" x2="410.0" y2="300.0" stroke="#000" stroke-width="1.3"/><path d="M414.6 214 Q406 241.6 399.7 320 M438 218.2 Q427.4 254.4 412.5 320 M387 243.7 L382.7 320 M401.9 241.6 L395.5 320" fill="none" stroke="#000" stroke-width="1.3" stroke-linejoin="round" stroke-linecap="round"/><path d="M342.0 211.0 L418.5 170.6 L425.0 181.3 L344.0 221.6 Z" fill="#fff" stroke="#000" stroke-width="1.5" stroke-linejoin="round"/><path d="M386.7 188.0 L394.0 183.4 L397.3 193.0 L390.0 198.3 Z" fill="url(#tex2)" stroke="#000" stroke-width="1.3" stroke-linejoin="round"/><path d="M414.3 173.0 L421.0 168.5 L425.0 178.0 L418.0 181.3 Z" fill="url(#tex2)" stroke="#000" stroke-width="1.3" stroke-linejoin="round"/><path d="M246 268.4 L330 222 Q342 216 344 226 Q346 232 338 236 L252 284 Q242 288 240 278 Q240 271 246 268.4 Z" fill="#fff" stroke="#000" stroke-width="1.5" stroke-linejoin="round" stroke-linecap="round"/><path d="M247 276 q4 -4 9 -3 M250 281 l8 -4" fill="none" stroke="#000" stroke-width="1.1" stroke-linejoin="round" stroke-linecap="round"/><path d="M316.5 215.0 L330.0 212.0 L340.0 216.0 L342.0 223.8 L332.0 224.0 L320.0 222.0 Z" fill="#ccc" stroke="#000" stroke-width="1.2" stroke-linejoin="round"/></svg><!--/ART-->
  </div>
  <div class="btn" style="left:20px;top:542px;width:48px;height:42px"></div>
  <svg class="abs" style="left:34px;top:553px" width="20" height="20" viewBox="0 0 20 20">
    <path d="M6.5 10.5 V5 A1.2 1.2 0 0 1 8.9 5 V9.5 M8.9 9.5 V3.8 A1.2 1.2 0 0 1 11.3 3.8 V9.5 M11.3 9.5 V4.5 A1.2 1.2 0 0 1 13.7 4.5 V9.5 M13.7 9.5 V6.5 A1.2 1.2 0 0 1 16.1 6.5 V12 A5.5 5.5 0 0 1 10.6 17.5 H9.5 A4.5 4.5 0 0 1 6 15.8 L3.3 12.3 A1.3 1.3 0 0 1 5.2 10.6 L6.5 12" fill="none" stroke="#fff" stroke-width="1.3" stroke-linejoin="round"/>
  </svg>
  <div class="btn" style="left:80px;top:543px;width:123px;height:40px"></div>
  <div class="abs" style="left:99px;top:561px;width:12px;height:1.6px;background:#e8e8e8"></div>
  <div class="abs" style="left:123px;top:553px;font-size:15px;color:#f0f0f0;white-space:nowrap">100%</div>
  <div class="abs" style="left:172px;top:561px;width:12px;height:1.6px;background:#e8e8e8"></div>
  <div class="abs" style="left:177.2px;top:555.5px;width:1.6px;height:12px;background:#e8e8e8"></div>
  <!-- thumbs -->
  <div class="abs" id="th1" style="left:339px;top:522px;width:56px;height:56px;border-radius:9px;overflow:hidden;background:#8aa0a4"><!--T1--><svg width="56" height="56" viewBox="0 0 56 56" style="display:block">
<rect width="56" height="56" fill="#34505e"/>
<rect x="0" y="0" width="56" height="4" fill="#5d7a80"/>
<path d="M0 9 h7 M0 17 h7 M0 25 h7 M0 33 h7" stroke="#a9b8ae" stroke-width="1.3"/>
<rect x="7" y="4" width="5" height="44" fill="#b3c0b5"/>
<rect x="16" y="5" width="10" height="18" fill="#a8b7ac"/>
<path d="M16 9 h10 M16 14 h10 M19 5 v18" stroke="#2e4a58" stroke-width="1"/>
<rect x="26" y="4" width="17" height="46" fill="#bfcabd"/>
<rect x="29" y="5" width="10" height="11" fill="#2a4452"/>
<rect x="32" y="10" width="5" height="5" fill="#d0d9cd"/>
<rect x="43" y="0" width="6" height="56" fill="#dde4d8"/>
<rect x="49" y="0" width="7" height="56" fill="#4f6a75"/>
<path d="M8 30 L27 18" stroke="#13242e" stroke-width="1.4"/>
<path d="M8.0 26.7h1.0v1.0h-1.0zM16.1 15.7h1.2v1.2h-1.2zM47.3 9.5h1.5v1.5h-1.5zM46.3 33.3h1.2v1.2h-1.2zM39.9 29.3h1.3v1.3h-1.3zM49.7 42.1h1.0v1.0h-1.0zM3.9 50.6h1.1v1.1h-1.1zM42.7 13.4h1.2v1.2h-1.2zM20.6 39.6h1.6v1.6h-1.6zM27.8 31.0h1.1v1.1h-1.1zM13.3 51.3h0.9v0.9h-0.9zM50.8 35.8h0.9v0.9h-0.9zM48.8 6.4h1.3v1.3h-1.3zM7.3 53.4h1.0v1.0h-1.0zM47.2 4.3h1.3v1.3h-1.3zM4.6 2.6h1.3v1.3h-1.3zM53.1 37.3h1.5v1.5h-1.5zM42.6 28.6h0.9v0.9h-0.9zM28.9 10.8h1.2v1.2h-1.2zM19.8 27.4h1.0v1.0h-1.0zM38.4 23.1h1.2v1.2h-1.2zM5.2 26.8h1.2v1.2h-1.2zM52.5 30.8h0.9v0.9h-0.9zM16.9 18.8h1.4v1.4h-1.4zM50.8 52.7h1.6v1.6h-1.6zM50.0 46.5h1.5v1.5h-1.5zM2.1 27.0h1.3v1.3h-1.3zM37.3 33.5h1.3v1.3h-1.3zM50.5 5.6h1.2v1.2h-1.2zM51.9 2.7h0.9v0.9h-0.9zM47.1 51.7h0.8v0.8h-0.8zM2.7 45.0h1.4v1.4h-1.4zM28.5 31.7h1.4v1.4h-1.4zM43.8 1.0h0.9v0.9h-0.9zM43.1 52.7h1.5v1.5h-1.5zM22.6 18.8h1.1v1.1h-1.1zM1.8 41.8h1.0v1.0h-1.0zM32.0 28.9h1.1v1.1h-1.1zM36.8 25.1h1.0v1.0h-1.0zM47.7 10.3h0.9v0.9h-0.9zM14.4 26.4h1.4v1.4h-1.4zM18.6 13.6h1.3v1.3h-1.3zM14.8 28.7h1.0v1.0h-1.0zM47.5 10.8h1.0v1.0h-1.0zM17.0 18.5h1.4v1.4h-1.4zM36.7 42.9h1.2v1.2h-1.2zM5.2 41.5h1.0v1.0h-1.0zM12.5 23.0h1.6v1.6h-1.6zM20.6 19.9h1.5v1.5h-1.5zM53.5 21.5h0.9v0.9h-0.9zM42.8 42.5h1.1v1.1h-1.1zM42.9 21.1h1.0v1.0h-1.0zM32.4 40.3h1.2v1.2h-1.2zM44.4 1.7h1.2v1.2h-1.2zM21.2 4.5h1.5v1.5h-1.5zM8.6 11.9h1.5v1.5h-1.5zM51.9 50.4h1.1v1.1h-1.1zM50.3 8.5h1.4v1.4h-1.4zM51.1 11.2h0.9v0.9h-0.9zM36.9 47.8h1.4v1.4h-1.4zM51.3 25.0h1.1v1.1h-1.1zM7.4 15.5h1.6v1.6h-1.6zM4.8 10.8h1.1v1.1h-1.1zM3.6 17.3h0.9v0.9h-0.9zM7.5 28.9h1.2v1.2h-1.2zM31.1 41.4h1.2v1.2h-1.2zM51.2 5.3h1.0v1.0h-1.0zM5.1 17.4h1.4v1.4h-1.4zM50.0 27.7h0.9v0.9h-0.9zM18.5 31.1h1.0v1.0h-1.0zM43.0 52.5h1.2v1.2h-1.2zM33.0 45.8h1.2v1.2h-1.2zM11.1 51.0h1.6v1.6h-1.6zM2.3 41.4h1.1v1.1h-1.1zM3.8 9.6h0.9v0.9h-0.9zM40.0 12.2h0.8v0.8h-0.8zM12.6 43.4h1.2v1.2h-1.2zM35.6 25.6h0.9v0.9h-0.9zM1.8 17.1h0.8v0.8h-0.8zM14.8 33.8h1.1v1.1h-1.1zM26.1 34.1h1.1v1.1h-1.1zM19.9 47.8h1.3v1.3h-1.3zM23.1 29.6h1.2v1.2h-1.2zM18.6 49.4h1.0v1.0h-1.0zM50.6 46.2h1.5v1.5h-1.5zM9.6 28.0h1.6v1.6h-1.6zM16.3 10.1h1.4v1.4h-1.4zM13.5 31.9h0.9v0.9h-0.9zM51.2 16.1h0.9v0.9h-0.9zM37.4 19.4h1.2v1.2h-1.2zM27.4 49.9h1.2v1.2h-1.2zM21.1 1.1h1.2v1.2h-1.2zM15.3 31.4h1.3v1.3h-1.3zM25.5 5.8h1.2v1.2h-1.2zM26.5 35.0h1.6v1.6h-1.6zM15.8 24.5h0.9v0.9h-0.9zM43.4 13.4h1.5v1.5h-1.5zM43.3 14.5h1.5v1.5h-1.5zM27.7 23.6h1.2v1.2h-1.2zM51.1 27.0h1.2v1.2h-1.2zM16.4 45.6h1.2v1.2h-1.2zM19.2 11.4h1.0v1.0h-1.0zM45.2 43.6h1.6v1.6h-1.6zM49.6 37.3h1.4v1.4h-1.4zM38.7 43.9h1.4v1.4h-1.4zM10.3 44.2h1.0v1.0h-1.0zM13.9 49.7h0.8v0.8h-0.8zM28.1 19.2h1.4v1.4h-1.4zM33.4 49.3h1.5v1.5h-1.5zM35.1 4.4h1.3v1.3h-1.3zM6.8 53.1h1.5v1.5h-1.5zM17.5 10.9h1.4v1.4h-1.4zM41.2 53.2h1.3v1.3h-1.3zM7.6 39.5h0.8v0.8h-0.8zM47.0 41.7h1.4v1.4h-1.4zM47.3 31.2h1.6v1.6h-1.6zM34.9 27.1h1.1v1.1h-1.1zM19.7 2.2h0.9v0.9h-0.9zM43.2 13.1h1.3v1.3h-1.3zM42.1 37.8h1.2v1.2h-1.2zM17.7 15.5h0.9v0.9h-0.9zM35.3 37.4h1.6v1.6h-1.6zM18.5 50.1h1.5v1.5h-1.5zM16.4 51.5h1.3v1.3h-1.3zM52.0 42.0h1.1v1.1h-1.1zM15.8 28.7h1.2v1.2h-1.2zM2.9 46.7h1.2v1.2h-1.2zM26.1 40.5h1.0v1.0h-1.0zM11.6 31.8h1.0v1.0h-1.0zM18.4 4.7h0.8v0.8h-0.8zM19.8 28.9h1.6v1.6h-1.6zM34.9 23.0h1.1v1.1h-1.1zM13.5 26.1h1.6v1.6h-1.6zM7.5 23.9h1.3v1.3h-1.3zM41.4 30.4h1.3v1.3h-1.3zM50.7 48.8h1.0v1.0h-1.0zM29.7 53.9h1.2v1.2h-1.2zM11.0 41.6h0.8v0.8h-0.8zM9.0 30.2h1.0v1.0h-1.0zM39.1 39.5h1.1v1.1h-1.1zM41.6 35.3h1.4v1.4h-1.4zM25.2 23.9h0.9v0.9h-0.9zM26.2 51.6h1.5v1.5h-1.5zM4.0 4.8h1.0v1.0h-1.0zM37.8 24.2h0.9v0.9h-0.9zM23.6 31.4h1.4v1.4h-1.4zM22.4 35.4h1.3v1.3h-1.3zM33.6 3.5h1.4v1.4h-1.4zM7.8 3.9h1.2v1.2h-1.2zM1.9 4.9h1.1v1.1h-1.1zM25.8 6.6h1.6v1.6h-1.6zM46.2 26.8h1.3v1.3h-1.3zM17.7 53.1h0.9v0.9h-0.9zM17.1 12.7h1.5v1.5h-1.5zM28.0 22.8h1.1v1.1h-1.1zM48.0 14.6h1.4v1.4h-1.4zM38.5 24.8h1.1v1.1h-1.1zM24.2 25.0h1.1v1.1h-1.1zM34.1 22.8h1.0v1.0h-1.0zM42.0 25.1h1.2v1.2h-1.2zM47.6 25.1h1.1v1.1h-1.1zM48.6 52.7h1.4v1.4h-1.4zM22.3 36.6h1.4v1.4h-1.4zM16.7 39.4h1.6v1.6h-1.6zM35.8 36.4h1.1v1.1h-1.1zM35.6 13.0h1.4v1.4h-1.4zM29.6 52.9h1.1v1.1h-1.1zM38.7 1.9h1.1v1.1h-1.1zM41.6 14.8h1.3v1.3h-1.3zM12.7 22.1h1.6v1.6h-1.6z" fill="#2b4654"/><path d="M11.4 49.4h0.8v0.8h-0.8zM31.9 44.5h1.4v1.4h-1.4zM21.7 32.3h1.3v1.3h-1.3zM41.4 40.6h1.2v1.2h-1.2zM14.3 38.4h1.2v1.2h-1.2zM29.8 53.3h0.9v0.9h-0.9zM42.4 18.2h1.3v1.3h-1.3zM51.4 15.5h1.2v1.2h-1.2zM29.0 27.2h0.9v0.9h-0.9zM34.1 48.4h1.3v1.3h-1.3zM16.3 43.7h1.1v1.1h-1.1zM8.7 33.1h1.1v1.1h-1.1zM29.1 53.5h1.2v1.2h-1.2zM51.5 19.7h1.3v1.3h-1.3zM5.0 16.9h1.3v1.3h-1.3zM37.6 44.9h1.1v1.1h-1.1zM15.5 20.0h1.2v1.2h-1.2zM2.3 20.9h1.3v1.3h-1.3zM8.9 17.5h1.4v1.4h-1.4zM50.5 14.2h0.9v0.9h-0.9zM7.2 5.5h1.4v1.4h-1.4zM40.2 15.0h1.1v1.1h-1.1zM37.9 2.5h1.4v1.4h-1.4zM46.6 12.2h1.3v1.3h-1.3zM38.1 18.9h1.4v1.4h-1.4zM12.6 26.1h1.0v1.0h-1.0zM24.4 44.1h1.2v1.2h-1.2zM33.3 53.3h1.0v1.0h-1.0zM12.8 33.8h0.9v0.9h-0.9zM52.1 19.1h1.1v1.1h-1.1zM23.9 44.9h1.4v1.4h-1.4zM36.9 10.1h1.0v1.0h-1.0zM38.4 12.5h1.4v1.4h-1.4zM47.2 13.0h1.1v1.1h-1.1zM13.1 39.1h0.8v0.8h-0.8zM37.9 4.3h1.4v1.4h-1.4zM29.8 31.9h0.9v0.9h-0.9zM3.3 19.7h1.5v1.5h-1.5zM32.8 46.7h0.8v0.8h-0.8zM6.4 2.1h1.3v1.3h-1.3zM10.3 15.5h1.3v1.3h-1.3zM37.9 18.1h1.1v1.1h-1.1zM16.3 30.8h1.0v1.0h-1.0zM20.1 14.2h1.0v1.0h-1.0zM14.8 1.9h1.0v1.0h-1.0zM32.4 15.2h0.9v0.9h-0.9zM45.8 25.9h1.2v1.2h-1.2zM17.5 48.0h1.3v1.3h-1.3zM34.0 35.9h1.3v1.3h-1.3zM27.5 22.9h1.1v1.1h-1.1zM27.7 25.8h1.2v1.2h-1.2zM29.3 42.8h1.4v1.4h-1.4zM12.9 2.2h1.0v1.0h-1.0zM2.7 43.2h1.2v1.2h-1.2zM16.1 11.1h1.4v1.4h-1.4zM45.3 37.2h1.3v1.3h-1.3zM40.5 25.1h1.1v1.1h-1.1zM30.3 47.7h1.5v1.5h-1.5zM49.6 45.3h0.9v0.9h-0.9zM14.1 52.5h1.2v1.2h-1.2zM28.3 17.4h1.4v1.4h-1.4zM28.4 53.5h0.9v0.9h-0.9zM53.6 1.7h0.9v0.9h-0.9zM21.6 34.9h0.9v0.9h-0.9zM30.8 50.8h1.1v1.1h-1.1zM41.4 32.4h1.2v1.2h-1.2zM10.2 25.6h1.4v1.4h-1.4zM36.7 12.5h1.1v1.1h-1.1zM29.8 18.8h1.2v1.2h-1.2zM34.5 1.9h1.0v1.0h-1.0zM35.8 12.4h0.9v0.9h-0.9zM41.4 18.7h1.5v1.5h-1.5zM30.6 6.4h1.2v1.2h-1.2zM14.9 44.2h1.3v1.3h-1.3zM41.2 4.0h0.8v0.8h-0.8zM43.3 8.4h0.9v0.9h-0.9zM2.6 9.7h1.1v1.1h-1.1zM51.8 18.0h1.0v1.0h-1.0zM44.9 10.8h1.2v1.2h-1.2zM33.6 50.6h0.8v0.8h-0.8zM30.8 21.3h1.4v1.4h-1.4zM14.4 38.9h0.9v0.9h-0.9zM27.2 52.3h1.0v1.0h-1.0zM15.8 49.6h1.3v1.3h-1.3zM4.5 10.9h1.0v1.0h-1.0zM16.4 45.8h1.3v1.3h-1.3zM52.9 36.5h1.2v1.2h-1.2zM21.3 39.0h1.1v1.1h-1.1zM4.1 27.1h1.1v1.1h-1.1zM29.1 3.6h0.8v0.8h-0.8zM53.1 20.7h1.0v1.0h-1.0zM8.9 32.4h1.4v1.4h-1.4zM10.6 27.5h1.1v1.1h-1.1zM41.6 30.9h1.0v1.0h-1.0zM11.1 39.4h0.9v0.9h-0.9zM46.8 2.8h0.9v0.9h-0.9zM25.8 45.7h1.2v1.2h-1.2zM40.5 41.3h1.3v1.3h-1.3zM3.7 44.7h0.9v0.9h-0.9zM9.6 3.0h0.8v0.8h-0.8zM47.5 21.2h0.9v0.9h-0.9zM3.5 45.9h1.2v1.2h-1.2zM49.6 3.0h0.9v0.9h-0.9zM16.2 11.1h0.9v0.9h-0.9zM11.6 34.9h0.9v0.9h-0.9zM9.9 29.4h1.1v1.1h-1.1zM8.9 31.1h1.2v1.2h-1.2zM21.6 26.1h0.8v0.8h-0.8zM33.6 11.2h1.0v1.0h-1.0zM1.5 48.0h1.2v1.2h-1.2zM21.8 29.7h1.5v1.5h-1.5zM8.0 21.3h1.3v1.3h-1.3zM20.7 38.5h1.4v1.4h-1.4zM3.2 16.1h1.0v1.0h-1.0zM40.8 42.6h1.3v1.3h-1.3zM50.0 10.8h1.1v1.1h-1.1zM46.2 41.6h0.9v0.9h-0.9zM52.9 40.2h1.4v1.4h-1.4zM20.2 33.1h1.5v1.5h-1.5zM48.6 31.6h1.4v1.4h-1.4zM53.9 45.5h1.3v1.3h-1.3zM51.9 8.6h1.1v1.1h-1.1zM30.9 8.0h1.3v1.3h-1.3zM4.3 34.3h1.0v1.0h-1.0zM18.1 33.2h0.9v0.9h-0.9zM24.7 46.4h1.5v1.5h-1.5zM14.9 20.4h1.3v1.3h-1.3zM11.1 46.0h0.9v0.9h-0.9zM30.5 19.0h0.8v0.8h-0.8zM1.1 1.1h1.0v1.0h-1.0zM15.6 53.5h1.2v1.2h-1.2zM4.5 38.9h1.0v1.0h-1.0zM26.5 39.3h1.4v1.4h-1.4zM50.6 23.3h1.0v1.0h-1.0zM22.1 17.6h1.3v1.3h-1.3zM25.5 37.3h0.9v0.9h-0.9zM42.5 52.2h0.9v0.9h-0.9zM33.7 9.6h0.8v0.8h-0.8zM22.9 10.7h1.3v1.3h-1.3zM31.3 36.7h1.5v1.5h-1.5z" fill="#cfd8cc"/>
<rect x="0" y="48" width="56" height="8" fill="#8fa3a1"/>
</svg><div style="position:absolute;left:13px;top:37px;width:31px;height:16px;background:rgba(62,62,62,0.8);border-radius:4px;color:#fff;font-size:11.5px;line-height:16px;text-align:center">原图</div><!--/T1--></div>
  <div class="abs" id="th2" style="left:408px;top:520px;width:60px;height:60px;border-radius:9px;overflow:hidden;background:#fff"><!--T2--><svg width="60" height="60" viewBox="0 0 60 60" style="display:block"><path d="M35.2 26.8h1.2v1.2h-1.2zM47.3 30.2h1.2v1.2h-1.2zM6.4 18.3h0.9v0.9h-0.9zM40.5 3.4h1.3v1.3h-1.3zM38.3 36.1h1.0v1.0h-1.0zM33.5 51.1h1.1v1.1h-1.1zM19.6 34.7h1.0v1.0h-1.0zM20.2 29.5h1.2v1.2h-1.2zM17.9 54.1h0.9v0.9h-0.9zM51.4 14.1h1.0v1.0h-1.0zM50.7 17.6h0.9v0.9h-0.9zM40.6 1.0h1.0v1.0h-1.0zM27.8 56.9h1.1v1.1h-1.1zM41.0 20.2h1.0v1.0h-1.0zM29.8 44.2h0.9v0.9h-0.9zM8.2 28.7h1.2v1.2h-1.2zM33.2 11.9h1.2v1.2h-1.2zM38.5 57.4h0.9v0.9h-0.9zM56.6 34.8h1.3v1.3h-1.3zM15.3 23.5h1.2v1.2h-1.2zM6.7 57.4h1.0v1.0h-1.0zM47.1 23.0h0.9v0.9h-0.9zM37.6 14.9h1.1v1.1h-1.1zM28.9 48.4h1.0v1.0h-1.0zM41.9 9.8h1.3v1.3h-1.3zM15.2 11.8h1.2v1.2h-1.2zM12.2 55.2h1.3v1.3h-1.3zM25.0 6.9h0.9v0.9h-0.9zM14.6 41.2h1.0v1.0h-1.0zM35.0 17.7h1.0v1.0h-1.0zM4.9 14.0h1.1v1.1h-1.1zM36.0 17.0h1.3v1.3h-1.3zM7.9 15.2h0.9v0.9h-0.9zM33.9 33.6h1.0v1.0h-1.0zM29.9 40.4h1.1v1.1h-1.1zM5.6 53.6h1.1v1.1h-1.1zM20.4 37.3h1.1v1.1h-1.1zM19.2 58.0h0.9v0.9h-0.9zM43.0 52.3h1.2v1.2h-1.2zM46.2 53.2h1.0v1.0h-1.0zM52.3 50.7h1.1v1.1h-1.1zM50.2 33.7h1.1v1.1h-1.1zM32.9 1.7h0.9v0.9h-0.9zM10.1 42.5h1.1v1.1h-1.1zM34.1 26.1h1.2v1.2h-1.2zM49.8 30.3h1.0v1.0h-1.0zM6.4 29.3h1.1v1.1h-1.1zM15.6 1.6h1.0v1.0h-1.0zM12.5 10.7h1.3v1.3h-1.3zM26.2 51.8h1.0v1.0h-1.0zM12.3 25.6h1.2v1.2h-1.2zM51.2 22.9h1.1v1.1h-1.1zM17.1 8.7h1.0v1.0h-1.0zM3.3 4.7h1.3v1.3h-1.3zM7.4 27.9h1.3v1.3h-1.3zM22.8 30.6h1.2v1.2h-1.2zM49.0 36.6h1.0v1.0h-1.0zM16.9 35.6h1.2v1.2h-1.2zM18.7 2.1h1.0v1.0h-1.0zM9.3 44.8h1.0v1.0h-1.0zM46.4 57.1h0.9v0.9h-0.9zM31.0 55.6h1.2v1.2h-1.2zM24.0 15.6h1.2v1.2h-1.2zM31.5 3.1h1.0v1.0h-1.0zM31.8 55.0h1.1v1.1h-1.1zM10.1 49.4h1.2v1.2h-1.2zM29.9 8.4h1.1v1.1h-1.1zM52.9 22.5h1.1v1.1h-1.1zM46.4 54.8h1.1v1.1h-1.1zM12.7 42.2h1.2v1.2h-1.2zM41.9 13.2h1.3v1.3h-1.3zM56.7 31.6h1.2v1.2h-1.2zM38.7 49.8h1.0v1.0h-1.0zM25.9 16.7h1.3v1.3h-1.3zM51.8 4.7h1.2v1.2h-1.2zM18.3 27.8h1.3v1.3h-1.3zM30.5 39.6h1.1v1.1h-1.1zM34.0 40.3h1.2v1.2h-1.2zM28.9 17.5h1.2v1.2h-1.2zM30.8 49.1h1.1v1.1h-1.1zM30.9 35.7h1.0v1.0h-1.0zM31.9 30.9h1.1v1.1h-1.1zM33.1 22.5h1.1v1.1h-1.1zM27.1 32.0h1.3v1.3h-1.3zM5.7 31.7h1.1v1.1h-1.1zM53.6 16.3h1.1v1.1h-1.1zM26.3 52.4h1.3v1.3h-1.3zM30.9 7.2h1.1v1.1h-1.1zM22.4 2.3h1.0v1.0h-1.0zM42.5 17.2h1.2v1.2h-1.2zM29.6 8.0h1.1v1.1h-1.1zM16.0 41.0h1.3v1.3h-1.3zM37.9 10.1h1.0v1.0h-1.0zM37.4 31.2h1.2v1.2h-1.2zM49.8 14.3h1.2v1.2h-1.2zM52.5 19.0h1.0v1.0h-1.0zM13.4 57.9h1.3v1.3h-1.3zM15.3 8.6h0.9v0.9h-0.9zM28.0 46.0h1.0v1.0h-1.0zM38.2 46.5h0.9v0.9h-0.9zM21.4 47.8h1.0v1.0h-1.0zM37.2 20.6h1.3v1.3h-1.3zM46.8 28.5h0.9v0.9h-0.9zM36.0 52.6h1.1v1.1h-1.1zM7.1 57.4h1.3v1.3h-1.3zM9.7 8.7h1.2v1.2h-1.2zM5.0 30.4h1.1v1.1h-1.1zM1.8 41.0h1.2v1.2h-1.2zM29.0 21.5h1.0v1.0h-1.0zM35.5 6.4h1.2v1.2h-1.2zM7.0 50.1h1.2v1.2h-1.2zM30.0 11.9h1.1v1.1h-1.1zM49.8 43.4h1.2v1.2h-1.2zM24.1 52.1h1.3v1.3h-1.3zM44.7 44.6h1.1v1.1h-1.1zM5.0 20.5h1.1v1.1h-1.1zM24.4 57.5h1.3v1.3h-1.3zM22.8 20.3h1.2v1.2h-1.2zM31.4 23.2h1.3v1.3h-1.3zM41.0 44.4h1.3v1.3h-1.3zM32.0 7.2h1.0v1.0h-1.0zM34.3 22.4h0.9v0.9h-0.9zM20.4 32.4h1.1v1.1h-1.1zM33.4 57.7h1.2v1.2h-1.2zM5.3 35.1h1.2v1.2h-1.2zM10.0 49.8h1.1v1.1h-1.1zM25.5 29.2h1.0v1.0h-1.0zM23.5 21.8h1.0v1.0h-1.0zM33.0 17.2h1.2v1.2h-1.2zM6.4 37.1h1.1v1.1h-1.1zM4.0 19.0h1.1v1.1h-1.1zM42.2 19.2h1.2v1.2h-1.2zM37.4 28.2h1.3v1.3h-1.3zM36.0 52.8h1.0v1.0h-1.0zM15.0 41.3h0.9v0.9h-0.9zM8.1 12.6h0.9v0.9h-0.9zM8.1 26.2h1.2v1.2h-1.2zM18.1 21.7h1.2v1.2h-1.2zM8.8 17.5h1.0v1.0h-1.0zM30.7 51.9h1.2v1.2h-1.2zM21.5 16.5h1.2v1.2h-1.2zM34.7 37.1h1.2v1.2h-1.2zM11.1 12.2h1.2v1.2h-1.2zM1.5 15.8h0.9v0.9h-0.9zM14.0 31.9h0.9v0.9h-0.9zM40.8 56.9h1.1v1.1h-1.1zM21.2 20.6h1.2v1.2h-1.2zM5.2 7.8h1.2v1.2h-1.2zM44.8 13.2h1.1v1.1h-1.1zM50.7 48.7h1.1v1.1h-1.1zM50.9 43.5h1.3v1.3h-1.3zM18.1 19.5h1.1v1.1h-1.1zM31.9 28.6h1.2v1.2h-1.2zM51.7 52.9h1.1v1.1h-1.1zM29.2 44.6h1.0v1.0h-1.0zM13.5 38.5h1.0v1.0h-1.0zM19.4 26.1h1.1v1.1h-1.1zM40.2 16.9h1.1v1.1h-1.1zM27.1 13.6h1.3v1.3h-1.3zM30.4 5.8h1.2v1.2h-1.2zM40.1 23.5h1.1v1.1h-1.1zM31.7 9.8h1.1v1.1h-1.1zM7.5 44.3h1.3v1.3h-1.3zM6.1 10.0h1.0v1.0h-1.0zM50.7 46.8h0.9v0.9h-0.9zM45.9 5.8h0.9v0.9h-0.9zM52.2 5.8h1.2v1.2h-1.2zM40.8 41.6h1.1v1.1h-1.1zM20.3 27.2h1.0v1.0h-1.0zM20.0 8.8h1.1v1.1h-1.1zM5.1 36.2h0.9v0.9h-0.9zM57.2 20.9h0.9v0.9h-0.9zM4.1 51.7h1.3v1.3h-1.3zM30.9 41.5h1.2v1.2h-1.2zM28.3 10.2h1.2v1.2h-1.2zM19.3 23.2h1.1v1.1h-1.1zM5.2 27.9h1.2v1.2h-1.2zM14.2 4.6h1.1v1.1h-1.1zM52.8 3.1h0.9v0.9h-0.9zM12.8 34.5h1.1v1.1h-1.1zM33.2 17.0h1.0v1.0h-1.0zM18.8 32.2h1.2v1.2h-1.2zM21.3 28.6h1.1v1.1h-1.1zM38.6 45.0h0.9v0.9h-0.9zM23.8 13.4h1.0v1.0h-1.0zM56.6 46.3h1.2v1.2h-1.2zM4.3 53.7h1.3v1.3h-1.3zM52.6 26.7h1.0v1.0h-1.0zM50.6 19.3h1.0v1.0h-1.0zM30.4 37.3h1.3v1.3h-1.3z" fill="#000"/><path d="M5 20 v8 M13 10 v8 M20 30 v12 M27 20 v10 M33 22 v8 M45 36 v6 M9 36 h6 M16 12 h5 M40 12 h4" stroke="#111" stroke-width="1" fill="none"/><path d="M16.2 31.5h1.2v1.2h-1.2zM44.9 1.1h1.8v1.8h-1.8zM49.2 47.9h1.1v1.1h-1.1zM16.4 41.8h1.1v1.1h-1.1zM28.4 27.7h2.0v2.0h-2.0zM34.4 49.9h1.3v1.3h-1.3zM46.0 24.8h1.9v1.9h-1.9zM6.2 48.1h1.2v1.2h-1.2zM32.0 31.0h1.2v1.2h-1.2zM48.4 18.8h1.3v1.3h-1.3zM5.3 18.4h1.5v1.5h-1.5zM41.8 21.5h1.7v1.7h-1.7zM7.0 23.5h1.5v1.5h-1.5zM56.1 48.3h1.7v1.7h-1.7zM1.7 22.5h1.7v1.7h-1.7zM14.5 33.2h1.5v1.5h-1.5zM1.6 57.5h1.8v1.8h-1.8zM12.8 36.1h1.3v1.3h-1.3zM22.4 31.8h1.3v1.3h-1.3zM20.2 23.4h1.7v1.7h-1.7zM15.6 12.4h1.7v1.7h-1.7zM19.8 54.9h1.6v1.6h-1.6zM42.3 19.9h1.8v1.8h-1.8zM6.3 9.0h1.1v1.1h-1.1zM39.6 41.4h1.2v1.2h-1.2zM23.9 48.7h1.6v1.6h-1.6zM6.1 13.9h1.2v1.2h-1.2zM8.1 24.2h1.1v1.1h-1.1zM53.5 25.3h1.5v1.5h-1.5zM37.9 44.7h1.8v1.8h-1.8zM23.0 19.9h1.4v1.4h-1.4zM1.9 23.8h1.7v1.7h-1.7zM57.0 46.0h1.7v1.7h-1.7zM35.7 2.1h1.3v1.3h-1.3zM20.5 38.1h1.1v1.1h-1.1zM22.5 30.0h1.8v1.8h-1.8zM48.0 35.9h1.2v1.2h-1.2zM44.7 52.5h1.5v1.5h-1.5zM21.1 29.5h1.1v1.1h-1.1zM41.7 57.2h1.5v1.5h-1.5zM41.8 48.6h1.2v1.2h-1.2zM54.9 36.7h1.2v1.2h-1.2zM5.7 14.9h1.6v1.6h-1.6zM40.7 19.8h1.9v1.9h-1.9zM21.6 27.4h1.1v1.1h-1.1zM56.5 8.7h1.9v1.9h-1.9zM32.0 33.0h1.6v1.6h-1.6zM16.1 52.8h2.0v2.0h-2.0zM47.6 35.3h1.1v1.1h-1.1zM48.0 17.4h1.9v1.9h-1.9z" fill="#aaa"/></svg><!--/T2--></div>
  <div class="abs" style="left:433px;top:516px;width:0;height:0;border-left:5px solid transparent;border-right:5px solid transparent;border-bottom:5px solid #fff"></div>
  <div class="abs" id="th3" style="left:481px;top:522px;width:56px;height:56px;border-radius:9px;overflow:hidden;background:#fff"><!--T3--><svg width="56" height="56" viewBox="0 0 56 56" style="display:block"><path d="M39.0 20.2h0.9v0.9h-0.9zM44.0 25.1h1.0v1.0h-1.0zM50.3 53.9h0.9v0.9h-0.9zM45.9 49.0h1.1v1.1h-1.1zM41.5 9.4h1.0v1.0h-1.0zM36.0 10.2h1.1v1.1h-1.1zM39.7 50.4h0.8v0.8h-0.8zM39.2 42.7h1.0v1.0h-1.0zM6.0 34.1h1.1v1.1h-1.1zM40.8 26.7h1.3v1.3h-1.3zM46.3 22.7h1.0v1.0h-1.0zM49.0 28.9h1.1v1.1h-1.1zM8.4 18.0h0.8v0.8h-0.8zM48.7 39.8h1.1v1.1h-1.1zM17.2 32.5h0.8v0.8h-0.8zM30.2 52.5h1.0v1.0h-1.0zM20.1 29.9h1.1v1.1h-1.1zM47.6 54.0h1.2v1.2h-1.2zM20.5 29.9h1.1v1.1h-1.1zM45.9 48.9h0.8v0.8h-0.8zM7.6 29.5h1.3v1.3h-1.3zM13.4 39.6h0.8v0.8h-0.8zM32.9 22.1h1.0v1.0h-1.0zM3.4 2.6h1.2v1.2h-1.2zM27.7 8.6h1.2v1.2h-1.2zM47.6 11.7h1.2v1.2h-1.2zM4.1 17.7h1.2v1.2h-1.2zM1.8 34.7h1.1v1.1h-1.1zM29.3 13.5h1.3v1.3h-1.3zM35.5 17.2h1.2v1.2h-1.2zM15.5 23.3h1.2v1.2h-1.2zM29.0 46.7h0.9v0.9h-0.9zM15.3 39.2h1.1v1.1h-1.1zM24.6 20.7h1.1v1.1h-1.1zM32.3 13.1h1.0v1.0h-1.0zM36.4 15.7h1.1v1.1h-1.1zM5.7 29.1h0.8v0.8h-0.8zM16.1 14.3h1.2v1.2h-1.2zM24.9 53.4h0.9v0.9h-0.9zM44.8 48.5h1.3v1.3h-1.3zM29.6 49.6h1.1v1.1h-1.1zM30.7 42.2h1.3v1.3h-1.3zM30.3 42.5h1.1v1.1h-1.1zM45.8 37.3h1.1v1.1h-1.1zM10.2 42.3h0.9v0.9h-0.9zM13.5 24.3h1.2v1.2h-1.2zM42.9 13.5h1.0v1.0h-1.0zM36.8 11.7h1.3v1.3h-1.3zM29.1 47.3h0.9v0.9h-0.9zM5.2 27.7h1.2v1.2h-1.2zM2.6 7.1h0.9v0.9h-0.9zM31.7 39.3h1.1v1.1h-1.1zM27.7 3.2h1.0v1.0h-1.0zM28.8 15.0h1.1v1.1h-1.1zM38.7 9.5h1.1v1.1h-1.1zM42.7 4.2h1.0v1.0h-1.0zM17.4 38.3h1.3v1.3h-1.3zM39.1 25.1h1.2v1.2h-1.2zM15.9 22.7h1.1v1.1h-1.1zM37.4 5.1h0.8v0.8h-0.8zM41.5 39.9h0.9v0.9h-0.9zM40.0 46.3h1.0v1.0h-1.0zM14.8 53.0h1.1v1.1h-1.1zM31.4 32.0h1.3v1.3h-1.3zM31.1 49.3h1.2v1.2h-1.2zM10.4 46.6h1.3v1.3h-1.3zM30.3 19.4h0.9v0.9h-0.9zM9.7 11.8h0.9v0.9h-0.9zM22.6 26.0h1.0v1.0h-1.0zM10.6 26.8h1.1v1.1h-1.1zM7.3 15.5h0.8v0.8h-0.8zM22.2 28.1h1.1v1.1h-1.1zM12.5 6.5h0.8v0.8h-0.8zM42.2 8.3h0.9v0.9h-0.9zM7.3 53.9h1.2v1.2h-1.2zM28.4 28.5h0.8v0.8h-0.8zM19.1 26.9h0.9v0.9h-0.9zM7.8 12.1h1.0v1.0h-1.0zM48.1 14.8h1.2v1.2h-1.2zM8.8 11.9h0.9v0.9h-0.9zM22.5 21.5h1.2v1.2h-1.2zM26.4 20.6h1.1v1.1h-1.1zM8.0 1.6h1.2v1.2h-1.2zM36.0 4.5h1.2v1.2h-1.2zM19.7 7.5h1.2v1.2h-1.2zM43.7 14.8h1.2v1.2h-1.2zM31.8 18.4h1.0v1.0h-1.0zM16.7 50.1h0.9v0.9h-0.9zM19.6 38.8h1.1v1.1h-1.1zM49.1 43.6h1.0v1.0h-1.0zM36.4 48.8h0.9v0.9h-0.9zM49.4 15.4h1.0v1.0h-1.0zM16.9 39.1h1.2v1.2h-1.2zM12.1 19.4h1.2v1.2h-1.2zM14.9 36.4h0.9v0.9h-0.9zM35.7 2.6h1.2v1.2h-1.2zM11.6 34.2h1.1v1.1h-1.1zM30.7 25.6h1.0v1.0h-1.0zM21.4 43.6h1.1v1.1h-1.1zM30.3 20.1h1.3v1.3h-1.3zM15.8 12.7h1.1v1.1h-1.1zM52.9 1.2h1.1v1.1h-1.1zM41.6 5.2h1.2v1.2h-1.2zM37.6 43.2h0.9v0.9h-0.9zM9.5 17.6h1.2v1.2h-1.2zM37.4 52.1h1.2v1.2h-1.2zM36.7 16.6h1.0v1.0h-1.0zM42.6 29.3h0.9v0.9h-0.9zM22.8 40.1h1.2v1.2h-1.2zM44.3 47.9h1.0v1.0h-1.0zM28.2 37.0h0.8v0.8h-0.8zM22.9 26.5h1.0v1.0h-1.0zM41.7 43.2h1.0v1.0h-1.0zM14.3 38.9h1.0v1.0h-1.0zM18.1 31.1h1.0v1.0h-1.0zM34.0 45.0h1.2v1.2h-1.2zM26.9 33.9h0.9v0.9h-0.9zM52.6 26.0h1.1v1.1h-1.1zM50.2 15.2h0.9v0.9h-0.9zM42.3 53.4h0.8v0.8h-0.8zM7.3 3.2h0.9v0.9h-0.9zM53.7 7.4h1.0v1.0h-1.0zM40.8 46.3h0.9v0.9h-0.9zM31.2 16.0h1.0v1.0h-1.0zM41.6 53.0h1.0v1.0h-1.0zM29.9 43.4h0.9v0.9h-0.9zM4.4 30.5h1.2v1.2h-1.2zM23.9 9.0h1.2v1.2h-1.2zM39.7 15.5h0.9v0.9h-0.9zM26.2 30.2h1.1v1.1h-1.1zM9.3 5.2h0.9v0.9h-0.9zM14.9 53.6h1.0v1.0h-1.0zM24.7 4.1h1.1v1.1h-1.1zM34.0 15.7h1.3v1.3h-1.3zM53.7 24.5h1.2v1.2h-1.2zM10.3 2.4h0.9v0.9h-0.9zM6.1 15.4h0.8v0.8h-0.8zM4.3 25.7h1.2v1.2h-1.2zM26.4 43.9h1.2v1.2h-1.2zM22.2 43.6h1.2v1.2h-1.2zM53.3 6.3h1.3v1.3h-1.3zM46.2 22.7h1.2v1.2h-1.2zM1.5 8.5h1.0v1.0h-1.0zM27.8 15.7h1.3v1.3h-1.3zM24.8 17.5h0.8v0.8h-0.8zM32.5 15.0h0.9v0.9h-0.9zM7.9 37.1h0.9v0.9h-0.9zM13.5 20.8h0.9v0.9h-0.9zM28.0 18.0h1.1v1.1h-1.1zM11.8 47.7h1.0v1.0h-1.0zM6.7 53.3h1.0v1.0h-1.0zM12.6 22.6h1.2v1.2h-1.2zM24.0 4.7h1.0v1.0h-1.0zM47.7 42.2h1.1v1.1h-1.1zM44.7 35.1h0.9v0.9h-0.9zM48.0 46.4h1.1v1.1h-1.1zM31.1 7.0h1.2v1.2h-1.2zM25.0 36.3h1.0v1.0h-1.0zM14.5 20.9h1.1v1.1h-1.1zM5.8 16.1h0.8v0.8h-0.8zM23.6 9.1h1.0v1.0h-1.0zM40.1 17.6h1.2v1.2h-1.2zM22.3 47.0h0.9v0.9h-0.9zM27.0 13.4h1.2v1.2h-1.2zM50.7 45.0h1.2v1.2h-1.2zM53.7 4.4h1.2v1.2h-1.2zM14.3 43.8h1.0v1.0h-1.0zM46.9 11.4h0.9v0.9h-0.9zM4.9 30.4h1.2v1.2h-1.2zM18.1 4.0h1.2v1.2h-1.2zM4.5 50.9h1.2v1.2h-1.2zM25.0 3.0h1.0v1.0h-1.0zM45.2 7.2h0.9v0.9h-0.9zM42.8 4.8h1.3v1.3h-1.3zM43.1 17.8h1.3v1.3h-1.3zM30.7 53.7h1.0v1.0h-1.0zM38.1 45.8h1.3v1.3h-1.3zM12.1 12.1h1.2v1.2h-1.2zM37.0 7.1h1.3v1.3h-1.3zM19.9 11.4h1.3v1.3h-1.3zM40.0 20.1h1.0v1.0h-1.0zM16.2 4.8h0.9v0.9h-0.9zM36.1 27.8h1.3v1.3h-1.3zM47.2 23.1h1.0v1.0h-1.0zM9.1 46.3h1.1v1.1h-1.1zM28.8 21.5h1.2v1.2h-1.2zM24.8 4.4h1.0v1.0h-1.0zM29.1 36.1h0.8v0.8h-0.8zM1.8 20.9h1.1v1.1h-1.1zM21.6 15.8h0.9v0.9h-0.9zM41.8 6.5h1.1v1.1h-1.1zM14.7 5.7h1.0v1.0h-1.0zM43.4 53.5h1.2v1.2h-1.2zM36.4 9.3h0.8v0.8h-0.8zM36.3 17.7h1.1v1.1h-1.1zM52.4 52.8h1.3v1.3h-1.3zM14.2 53.9h0.8v0.8h-0.8zM27.5 42.9h1.3v1.3h-1.3zM32.0 27.4h1.2v1.2h-1.2zM6.1 43.1h0.8v0.8h-0.8zM37.9 42.7h1.3v1.3h-1.3zM52.4 26.1h1.2v1.2h-1.2zM19.9 51.1h1.2v1.2h-1.2zM24.4 22.9h1.1v1.1h-1.1zM42.1 6.0h1.3v1.3h-1.3zM4.6 13.6h1.1v1.1h-1.1zM17.3 19.7h0.9v0.9h-0.9zM25.7 53.5h1.1v1.1h-1.1zM4.2 6.5h1.2v1.2h-1.2zM39.0 28.8h1.0v1.0h-1.0zM46.8 52.1h1.0v1.0h-1.0zM16.3 40.1h1.0v1.0h-1.0zM37.1 2.5h0.9v0.9h-0.9zM35.6 3.4h1.0v1.0h-1.0zM21.0 29.4h1.1v1.1h-1.1zM31.8 30.7h0.9v0.9h-0.9zM50.1 6.1h1.1v1.1h-1.1zM44.1 14.7h1.0v1.0h-1.0zM27.8 18.7h0.9v0.9h-0.9zM39.9 4.3h1.1v1.1h-1.1zM22.2 12.8h0.8v0.8h-0.8zM20.9 28.6h1.1v1.1h-1.1zM20.8 32.4h0.9v0.9h-0.9zM19.9 14.1h1.3v1.3h-1.3zM45.5 12.1h1.2v1.2h-1.2zM19.8 27.4h1.1v1.1h-1.1zM3.8 5.9h0.9v0.9h-0.9zM28.8 5.8h1.1v1.1h-1.1zM28.5 53.2h1.2v1.2h-1.2zM24.7 16.1h0.9v0.9h-0.9zM27.0 21.9h0.8v0.8h-0.8zM24.9 34.9h0.8v0.8h-0.8zM40.9 31.7h0.8v0.8h-0.8zM23.2 37.0h1.3v1.3h-1.3zM5.0 42.4h1.0v1.0h-1.0zM21.0 24.7h1.0v1.0h-1.0zM26.6 45.3h1.3v1.3h-1.3zM36.1 38.7h1.2v1.2h-1.2zM48.5 49.9h0.9v0.9h-0.9zM37.3 8.4h1.3v1.3h-1.3zM23.5 23.9h1.0v1.0h-1.0zM50.2 27.2h1.1v1.1h-1.1zM30.1 6.6h1.2v1.2h-1.2zM37.8 44.6h1.1v1.1h-1.1zM38.3 37.2h1.0v1.0h-1.0zM25.5 41.9h0.9v0.9h-0.9zM22.0 5.8h1.0v1.0h-1.0zM19.6 22.8h0.8v0.8h-0.8zM43.5 14.5h0.9v0.9h-0.9zM39.2 22.9h1.1v1.1h-1.1zM8.5 13.3h1.2v1.2h-1.2zM22.9 53.7h1.0v1.0h-1.0zM30.0 18.7h0.9v0.9h-0.9zM41.5 43.7h0.8v0.8h-0.8zM12.6 11.6h1.1v1.1h-1.1zM7.4 41.5h1.1v1.1h-1.1zM50.0 37.5h1.0v1.0h-1.0zM39.1 16.4h1.2v1.2h-1.2zM15.0 14.2h0.8v0.8h-0.8zM14.4 16.5h0.9v0.9h-0.9z" fill="#c4c4c4"/><path d="M6 18 v8 M12 12 v10 M20 28 v10 M26 20 v12 M36 24 v10 M8 36 h8 M14 10 h6 M30 34 v8" stroke="#dadada" stroke-width="1" fill="none"/></svg><!--/T3--></div>
  <!-- upload/download -->
  <div class="btn" style="left:692px;top:541px;width:84px;height:42px"></div>
  <svg class="abs" style="left:706px;top:554px" width="18" height="16" viewBox="0 0 18 16">
    <path d="M9.5 1.5 H4 A2 2 0 0 0 2 3.5 V12.5 A2 2 0 0 0 4 14.5 H10.5 M15.5 9.5 V3.5 A2 2 0 0 0 13.5 1.5 H12" fill="none" stroke="#fff" stroke-width="1.3"/>
    <path d="M2.2 8.2 A6.5 6.5 0 0 1 8.5 14.3" fill="none" stroke="#fff" stroke-width="1.3"/>
    <circle cx="11.5" cy="5.2" r="0.9" fill="#fff"/>
    <path d="M14 10.5 V15.8 M11.4 13.2 H16.6" stroke="#fff" stroke-width="1.3"/>
  </svg>
  <div class="abs" style="left:732px;top:553px;font-size:14px;color:#f0f0f0;white-space:nowrap">上传</div>
  <div class="btn" style="left:788px;top:541px;width:84px;height:42px"></div>
  <svg class="abs" style="left:803px;top:553px" width="18" height="18" viewBox="0 0 18 18">
    <path d="M6 2.5 H4.5 A2 2 0 0 0 2.5 4.5 V13.5 A2 2 0 0 0 4.5 15.5 H13.5 A2 2 0 0 0 15.5 13.5 V4.5 A2 2 0 0 0 13.5 2.5 H12" fill="none" stroke="#fff" stroke-width="1.3"/>
    <path d="M9 2 V10 M6 7.3 L9 10.3 L12 7.3" fill="none" stroke="#fff" stroke-width="1.3"/>
  </svg>
  <div class="abs" style="left:828px;top:553px;font-size:14px;color:#f0f0f0;white-space:nowrap">下载</div>
  <svg class="abs" style="left:846.5px;top:479.5px" width="17" height="24" viewBox="0 0 17 24">
    <path d="M2 2 V18.6 L6 14.8 L9 21.2 L11.6 20.1 L8.7 13.9 H14.4 Z" fill="#fff" stroke="#000" stroke-width="1.3" stroke-linejoin="round"/>
  </svg>
</div>

<div id="panel">
  <div class="abs" style="left:16px;top:19px;font-size:16px;color:#f2f2f2;white-space:nowrap">选择编辑方式</div>
  <!-- row1 -->
  <div class="card" style="left:16px;top:51px">
    <svg width="28" height="26" viewBox="0 0 28 26" style="left:26px;top:10.5px">
      <rect x="3.5" y="1.5" width="20.5" height="17.5" rx="3" fill="none" stroke="#fff" stroke-width="1.9"/>
      <text x="13.5" y="14.6" font-family="Liberation Sans" font-size="10" font-weight="bold" font-style="italic" fill="#fff" text-anchor="middle">HD</text>
    </svg>
    <div class="lbl">变清晰</div>
  </div>
  <div class="card" style="left:112px;top:51px">
    <svg width="28" height="26" viewBox="0 0 28 26" style="left:26px;top:10.5px">
      <path d="M21 1.5 L24.5 5 L11 19.5 L6.5 21 L7.5 16.5 Z" fill="none" stroke="#fff" stroke-width="1.85" stroke-linejoin="round"/>
      <path d="M10.5 0.5 l1 2.2 2.2 1 -2.2 1 -1 2.2 -1 -2.2 -2.2 -1 2.2 -1z" fill="#fff"/>
      <path d="M5.5 6.5 l0.7 1.5 1.5 0.7 -1.5 0.7 -0.7 1.5 -0.7 -1.5 -1.5 -0.7 1.5 -0.7z" fill="#fff"/>
      <circle cx="22.5" cy="19" r="1.2" fill="#fff"/>
    </svg>
    <div class="lbl">AI去水印</div>
  </div>
  <div class="card" style="left:208px;top:51px">
    <svg width="28" height="26" viewBox="0 0 28 26" style="left:26px;top:9px">
      <path d="M4 16 V5 A2 2 0 0 1 6 3 H14.5" fill="none" stroke="#fff" stroke-width="1.85"/>
      <rect x="8" y="7" width="14" height="14" rx="2.5" fill="none" stroke="#fff" stroke-width="1.9"/>
      <path d="M11.5 11 V10 H18.5 V11 M15 10 V18 M13 18 H17" fill="none" stroke="#fff" stroke-width="1.4"/>
    </svg>
    <div style="position:absolute;right:0;top:0;width:28px;height:15px;background:linear-gradient(90deg,#f23b1c,#ff8c3c);border-radius:0 9px 0 8px;font-size:9.5px;font-weight:bold;color:#fff;text-align:center;line-height:15px">NEW</div>
    <div class="lbl">文字替换</div>
  </div>
  <div class="card sel" style="left:303px;top:51px">
    <svg width="28" height="26" viewBox="0 0 28 26" style="left:25px;top:8px">
      <path d="M5 5.5 C7 3.5 9 3.5 11 5.5 S15 7.5 17 5.5 S21 3.5 23 5.5" fill="none" stroke="#63c8f0" stroke-width="1.85" stroke-linecap="round"/>
      <path d="M5 11.5 C7 9.5 9 9.5 11 11.5 S15 13.5 17 11.5" fill="none" stroke="#63c8f0" stroke-width="1.85" stroke-linecap="round"/>
      <path d="M20 10 l1.2 3 3 1.2 -3 1.2 -1.2 3 -1.2 -3 -3 -1.2 3 -1.2z" fill="#63c8f0"/>
    </svg>
    <div class="lbl" style="top:41px">提取线稿</div>
  </div>
  <!-- row2 -->
  <div class="card" style="left:16px;top:134px">
    <svg width="28" height="26" viewBox="0 0 28 26" style="left:26px;top:9px">
      <rect x="5.5" y="2" width="3" height="3" fill="#b0b0b0"/><rect x="11.5" y="2" width="3" height="3" fill="#b0b0b0"/>
      <rect x="8.5" y="5" width="3" height="3" fill="#b0b0b0"/>
      <rect x="5.5" y="8" width="3" height="3" fill="#b0b0b0"/>
      <path d="M20.5 3.5 A1.5 1.5 0 0 1 22 5 V18.5 A1.5 1.5 0 0 1 20.5 20 H7.5 A1.2 1.2 0 0 1 6.6 18 Z" fill="none" stroke="#fff" stroke-width="1.85" stroke-linejoin="round"/>
    </svg>
    <div class="lbl">智能抠图</div>
  </div>
  <div class="card" style="left:112px;top:134px">
    <svg width="28" height="26" viewBox="0 0 28 26" style="left:26px;top:9px">
      <path d="M18.5 3 L24.5 9 A1.2 1.2 0 0 1 24.5 10.5 L15 20 A1.2 1.2 0 0 1 13.5 20 L7.5 14 A1.2 1.2 0 0 1 7.5 12.5 L17 3 A1.2 1.2 0 0 1 18.5 3 Z" fill="none" stroke="#fff" stroke-width="1.75"/>
      <path d="M11 9 L18.5 16.5" stroke="#fff" stroke-width="1.75"/>
      <path d="M5.5 24 H9.5 M13 24 H22" stroke="#fff" stroke-width="1.75"/>
    </svg>
    <div class="lbl">涂抹消除</div>
  </div>
  <div class="card" style="left:208px;top:134px">
    <svg width="28" height="26" viewBox="0 0 28 26" style="left:26px;top:9px">
      <rect x="3.5" y="3" width="15" height="19" rx="2.3" fill="none" stroke="#fff" stroke-width="1.85"/>
      <path d="M22.5 5 V20" stroke="#fff" stroke-width="1.85"/>
      <path d="M3.8 10.5 A9.5 10 0 0 1 13 21.5" fill="none" stroke="#fff" stroke-width="1.75"/>
      <path d="M13 5.5 l0.7 1.6 1.6 0.7 -1.6 0.7 -0.7 1.6 -0.7 -1.6 -1.6 -0.7 1.6 -0.7z" fill="#fff"/>
    </svg>
    <div class="lbl">AI相似图</div>
  </div>
  <div class="card" style="left:303px;top:134px">
    <svg width="28" height="26" viewBox="0 0 28 26" style="left:26px;top:9px">
      <rect x="3" y="8.5" width="11.5" height="13" rx="2.5" fill="none" stroke="#fff" stroke-width="1.85"/>
      <path d="M9 6 V5 A2.2 2.2 0 0 1 11.2 3 H12.5 M15.5 3 H17.5 A2.2 2.2 0 0 1 19.7 5 V6.5 M19.7 9.5 V12.5 A2.2 2.2 0 0 1 17.5 14.5 H16" fill="none" stroke="#fff" stroke-width="1.85"/>
    </svg>
    <div class="lbl">局部替换</div>
  </div>
  <!-- row3 -->
  <div class="card" style="left:16px;top:217px">
    <svg width="28" height="26" viewBox="0 0 28 26" style="left:26px;top:9px">
      <circle cx="12" cy="14.5" r="9.2" fill="none" stroke="#fff" stroke-width="1.9"/>
      <circle cx="8.8" cy="12.5" r="1.1" fill="#fff"/>
      <path d="M14.5 11 L13 12.3 L14.8 13.2" fill="none" stroke="#fff" stroke-width="1.2"/>
      <path d="M9 15.5 A3.2 3.2 0 0 0 15.5 15.5 V14.5" fill="none" stroke="#fff" stroke-width="1.4"/>
      <path d="M23 2.5 l0.9 2.1 2.1 0.9 -2.1 0.9 -0.9 2.1 -0.9 -2.1 -2.1 -0.9 2.1 -0.9z" fill="#fff"/>
    </svg>
    <div class="lbl">风格转换</div>
  </div>
  <div class="card" style="left:112px;top:217px">
    <svg width="28" height="26" viewBox="0 0 28 26" style="left:26px;top:9px">
      <rect x="5" y="4" width="18" height="18" rx="2" fill="none" stroke="#fff" stroke-width="1.85"/>
      <path d="M5.5 11 L12 4.5 M5.5 21.5 L22.5 4.5 M16 21.5 L22.5 15" stroke="#fff" stroke-width="1.75"/>
    </svg>
    <div class="lbl">背景替换</div>
  </div>
  <div class="card" style="left:208px;top:217px">
    <svg width="28" height="26" viewBox="0 0 28 26" style="left:26px;top:9px">
      <rect x="8" y="5" width="11.5" height="16.5" rx="2" fill="none" stroke="#fff" stroke-width="1.85"/>
      <path d="M6 5 H5 A1.5 1.5 0 0 0 3.5 6.5 V8 M3.5 11 V15.5 M3.5 18.5 V20 A1.5 1.5 0 0 0 5 21.5 H6 M21.5 5 H22.5 A1.5 1.5 0 0 1 24 6.5 V8 M24 11 V15.5 M24 18.5 V20 A1.5 1.5 0 0 1 22.5 21.5 H21.5" fill="none" stroke="#fff" stroke-width="1.75"/>
    </svg>
    <div class="lbl">AI扩图</div>
  </div>
  <div class="card" style="left:303px;top:217px">
    <svg width="28" height="26" viewBox="0 0 28 26" style="left:26px;top:9px">
      <path d="M6 13.5 V6.5 A2.5 2.5 0 0 1 8.5 4 H19 A2.5 2.5 0 0 1 21.5 6.5 V13.5" fill="none" stroke="#fff" stroke-width="1.85"/>
      <path d="M4 14 H23.5" stroke="#fff" stroke-width="1.85"/>
      <path d="M6 16.5 V19.5 A2.5 2.5 0 0 0 8.5 22 H9.5 M12.5 22 H15 M18 22 H19 A2.5 2.5 0 0 0 21.5 19.5 V16.5" fill="none" stroke="#fff" stroke-width="1.85"/>
      <path d="M13.5 6.8 l0.7 1.5 1.5 0.7 -1.5 0.7 -0.7 1.5 -0.7 -1.5 -1.5 -0.7 1.5 -0.7z" fill="#fff"/>
    </svg>
    <div style="position:absolute;right:0;top:0;width:28px;height:15px;background:#2e4753;border-radius:0 9px 0 8px;font-size:10px;color:#5ec6ee;text-align:center;line-height:15px">内测</div>
    <div class="lbl">AI重绘</div>
  </div>
  <div class="abs" style="left:16px;top:543px;width:367px;height:40px;border-radius:20px;background:linear-gradient(90deg,#5957fa,#6aa0fb 60%,#74dbfe);color:#fff;font-size:14px;text-align:center;line-height:41px;font-weight:bold">立即生成</div>
  <div class="abs" style="left:320px;top:583px;width:74px;height:14px;background:#1a1b1d;font-family:'Liberation Mono',monospace;font-size:11px;font-weight:bold;color:#7a7b7e;line-height:14px;letter-spacing:0.2px;text-align:center">A.PAO BLOG</div>
</div>

</body></html>
